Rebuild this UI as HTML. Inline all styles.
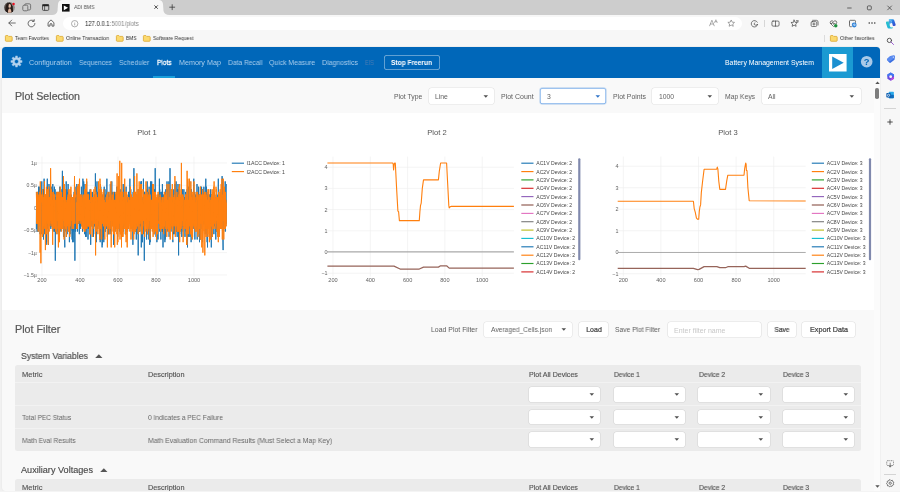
<!DOCTYPE html>
<html lang="en"><head><meta charset="utf-8"><title>ADI BMS</title>
<style>
html,body{margin:0;padding:0;}
body{width:900px;height:492px;overflow:hidden;position:relative;background:#f7f7f7;font-family:"Liberation Sans", sans-serif;}
.a{position:absolute;}
.t{position:absolute;white-space:nowrap;will-change:transform;}
.t.c{margin-left:-200px;width:400px;text-align:center;}
.t.r{margin-left:-400px;width:400px;text-align:right;}
svg{position:absolute;overflow:visible;will-change:transform;}
svg text{font-family:"Liberation Sans", sans-serif;}
</style></head>
<body>
<div class="a" style="left:0px;top:0px;width:900px;height:15px;background:#cdcdcd;"></div>
<svg style="left:52px;top:0" width="120" height="16" viewBox="0 0 120 16"><path d="M0 15 Q4.5 15 5.5 11 L6 4 Q6.5 0 10.5 0 L106.5 0 Q110.5 0 111 4 L111.5 11 Q112.5 15 117.5 15 Z" fill="#f7f7f7"/></svg>
<div class="a" style="left:0px;top:14.6px;width:900px;height:32px;background:#f7f7f7;"></div>
<svg style="left:4.2px;top:1.9px" width="12" height="11" viewBox="0 0 12 11">
<defs><clipPath id="av"><circle cx="5.5" cy="5.4" r="5.3"/></clipPath></defs>
<g clip-path="url(#av)"><rect x="0" y="0" width="12" height="11" fill="#8d8a88"/>
<rect x="0" y="0" width="4" height="11" fill="#5b5450"/>
<path d="M1.2 11 Q1 4 3 1.600 Q5 -0.300 7 1.200 Q8.600 3 8.300 7 L9 11 Z" fill="#2a1f1b"/>
<ellipse cx="5.600" cy="3.900" rx="1.350" ry="1.900" fill="#e6bfa9"/>
<path d="M3.600 11 Q3.800 7 5.300 6.600 L6.200 6.600 Q7.400 7.200 7.600 11 Z" fill="#ddb29b"/>
<path d="M2.200 11 L2.800 4 Q3.600 2 4.600 2.400 Q4 4.500 4.300 7 L3.800 11 Z" fill="#241a17"/>
<path d="M6.700 2.500 Q7.800 4 7.400 7 L8.200 11 L9.200 11 L8.600 4 Z" fill="#241a17"/></g>
<circle cx="9.600" cy="2.000" r="1.200" fill="#ee1122"/></svg>
<svg style="left:22px;top:3px" width="10" height="9" viewBox="0 0 10 9" fill="none" stroke="#6a6a6a" stroke-width="0.9">
<rect x="2.6" y="0.8" width="6" height="6.2" rx="1.4"/><rect x="0.8" y="2.2" width="5" height="5.6" rx="1.3" fill="#cdcdcd"/></svg>
<svg style="left:42px;top:4.1px" width="7.2" height="7.2" viewBox="0 0 8 8"><rect x="0.5" y="0.5" width="7" height="6.6" rx="1.1" fill="none" stroke="#333" stroke-width="0.9"/><rect x="0.5" y="0.5" width="7" height="2" fill="#222"/><line x1="2.9" y1="2" x2="2.9" y2="7" stroke="#333" stroke-width="0.8"/></svg>
<svg style="left:62.4px;top:3.8px" width="7.6" height="7.6" viewBox="0 0 8 8"><rect width="8" height="8" fill="#111"/><path d="M1.9 1.5 L6.4 4 L1.9 6.5 Z" fill="#fff"/></svg>
<span class="t" id="t0" style="left:74px;top:4.18px;font-size:5.6px;line-height:7.84px;color:#555;transform:scaleX(0.891);transform-origin:0 50%;">ADI BMS</span>
<svg style="left:154.1px;top:5.4px" width="4.2" height="4.2" viewBox="0 0 4.2 4.2"><path d="M0.4 0.4 L3.8 3.8 M3.8 0.4 L0.4 3.8" stroke="#333" stroke-width="0.85"/></svg>
<svg style="left:169.3px;top:4.0px" width="6.4" height="6.4" viewBox="0 0 6.4 6.4"><path d="M3.2 0.3 V6.1 M0.3 3.2 H6.1" stroke="#333" stroke-width="0.75"/></svg>
<svg style="left:846.2px;top:3.6px" width="50" height="9" viewBox="0 0 50 9" fill="none" stroke="#333" stroke-width="0.7"><path d="M1.2 4 H5.6"/><rect x="21.4" y="1.9" width="3.9" height="3.9" rx="0.9"/><path d="M41.4 1.7 L45.8 6.1 M45.8 1.7 L41.4 6.1"/></svg>
<svg style="left:8.4px;top:19.3px" width="8" height="8" viewBox="0 0 8 8" fill="none" stroke="#444" stroke-width="0.75" stroke-linecap="round" stroke-linejoin="round"><path d="M7.3 4 H0.9 M3.7 1.1 L0.8 4 L3.7 6.9"/></svg>
<svg style="left:27px;top:19px" width="9" height="9" viewBox="0 0 9 9" fill="none" stroke="#444" stroke-width="0.78" stroke-linecap="round"><path d="M7.9 4.5 A3.4 3.4 0 1 1 6.6 1.8"/><path d="M7.2 0.6 V2.4 H5.4" stroke-linejoin="round"/></svg>
<svg style="left:47px;top:19.3px" width="8" height="8" viewBox="0 0 9 9" fill="none" stroke="#444" stroke-width="0.9" stroke-linejoin="round"><path d="M1.2 4.1 L4.5 1 L7.8 4.1 V8 H5.6 V5.6 Q4.5 4.6 3.4 5.6 V8 H1.2 Z"/></svg>
<div class="a" style="left:63px;top:16.6px;width:679px;height:13.6px;background:#fff;border-radius:6.8px;"></div>
<svg style="left:70.8px;top:19.8px" width="7.4" height="7.4" viewBox="0 0 7.4 7.4" fill="none" stroke="#777" stroke-width="0.6"><circle cx="3.7" cy="3.7" r="3.2"/><path d="M3.7 3.2 V5.4 M3.7 1.9 V2.4"/></svg>
<span class="t" id="t1" style="left:85.4px;top:19.7px;font-size:6.4px;line-height:8.96px;color:#222;transform:scaleX(0.927);transform-origin:0 50%;"><span style="color:#222">127.0.0.1</span><span style="color:#8a8a8a">:5001/plots</span></span>
<svg style="left:709px;top:19.4px" width="9" height="8" viewBox="0 0 9 8" fill="none" stroke="#777" stroke-width="0.6" stroke-linecap="round" stroke-linejoin="round"><path d="M0.6 6.8 L2.9 1.2 L5.2 6.800 M1.400 5 H4.400"/><path d="M5.600 3.600 L6.900 0.700 L8.200 3.600 M6.100 2.700 H7.700" stroke-width="0.5"/></svg>
<svg style="left:726.5px;top:19.3px" width="8.4" height="8.4" viewBox="0 0 24 24" fill="none" stroke="#6a6a6a" stroke-width="1.7" stroke-linejoin="round"><path d="M12 2.8 L14.8 9 L21.5 9.7 L16.5 14.2 L17.9 20.8 L12 17.4 L6.1 20.8 L7.5 14.2 L2.5 9.7 L9.2 9 Z"/></svg>
<svg style="left:749.5px;top:18.8px" width="9" height="9" viewBox="0 0 24 24" fill="none" stroke="#3a3a3a" stroke-width="1.8" stroke-linecap="round" stroke-linejoin="round"><path d="M19.5 8.5 A8.6 8.6 0 1 0 20.3 15"/><path d="M20.3 15 Q14 18.5 11.2 14.5 Q10 11.5 13 10.2" /></svg>
<div class="a" style="left:764.1px;top:19.6px;width:0.6px;height:7.4px;background:#d6d6d6;"></div>
<svg style="left:770.5px;top:18.8px" width="9" height="9" viewBox="0 0 24 24" fill="none" stroke="#3a3a3a" stroke-width="1.8" stroke-linecap="round" stroke-linejoin="round"><rect x="2.5" y="5.5" width="19" height="13.5" rx="3"/><path d="M12 5.5 V19"/></svg>
<svg style="left:789.8px;top:18.8px" width="9" height="9" viewBox="0 0 24 24" fill="none" stroke="#3a3a3a" stroke-width="1.8" stroke-linecap="round" stroke-linejoin="round"><path d="M11 3 L13.5 8.8 L19.5 9.4 L15 13.6 L16.3 19.6 L11 16.5 L5.7 19.6 L7 13.6 L2.5 9.4 L8.5 8.8 Z"/><path d="M17 4.5 H22 M18.5 7.5 H22"/></svg>
<svg style="left:809.5px;top:18.8px" width="9" height="9" viewBox="0 0 24 24" fill="none" stroke="#3a3a3a" stroke-width="1.8" stroke-linecap="round" stroke-linejoin="round"><rect x="3" y="7" width="15" height="13" rx="3"/><path d="M7 3.5 H17 Q21.5 3.5 21.5 8 V16"/><path d="M10.5 10.5 V16.5 M7.5 13.5 H13.5"/></svg>
<svg style="left:828.8px;top:18.8px" width="9" height="9" viewBox="0 0 24 24" fill="none" stroke="#3a3a3a" stroke-width="1.8" stroke-linecap="round" stroke-linejoin="round"><path d="M12 20 L4.5 12.5 Q1.5 8.5 5 5.5 Q8.5 3.2 12 7 Q15.5 3.2 19 5.5 Q22.5 8.5 19.5 12.5"/><path d="M4 12 H8 L10 8.5 L12.5 14.5 L14 12 H16"/><circle cx="18" cy="18" r="4.6" fill="#1a8f3c" stroke="none"/></svg>
<svg style="left:847.8px;top:18.8px" width="9" height="9" viewBox="0 0 24 24" fill="none" stroke="#444" stroke-width="2" stroke-linecap="round"><path d="M4 8 V6 Q4 3.5 6.5 3.5 H17.5 Q20 3.5 20 6 V9 M4 8 V18 Q4 20.5 6.500 20.5 H9"/><circle cx="16.5" cy="16" r="6.4" fill="#2a7fd6" stroke="none"/><path d="M13.500 16.5 Q13.5 13 16.8 13 Q19.5 13.200 19.5 15.8 H15.5 Q15.8 18.600 19 18" stroke="#fff" stroke-width="1.400"/></svg>
<svg style="left:867.7px;top:22.3px" width="8" height="2" viewBox="0 0 8 2" fill="#222"><circle cx="1.2" cy="1" r="0.72"/><circle cx="4" cy="1" r="0.72"/><circle cx="6.800" cy="1" r="0.72"/></svg>
<svg style="left:884.8px;top:17.6px" width="11.6" height="11.6" viewBox="0 0 24 24"><defs><linearGradient id="cp1" x1="0" y1="0" x2="1" y2="1"><stop offset="0" stop-color="#2cc3f0"/><stop offset="0.5" stop-color="#2a6fe0"/><stop offset="1" stop-color="#3a46c8"/></linearGradient><linearGradient id="cp2" x1="0" y1="1" x2="1" y2="0"><stop offset="0" stop-color="#1aa9e8"/><stop offset="1" stop-color="#36d6b0"/></linearGradient></defs>
<path d="M9 2.500 H16 Q18.5 2.5 19.200 5 L22 13.500 Q22.800 16.500 19.500 16.500 H16.5 L13.500 6.500 Q13 4.500 11 4.500 L7.500 4.600 Q8 2.500 9 2.500 Z" fill="url(#cp1)"/>
<path d="M15 21.500 H8 Q5.500 21.500 4.800 19 L2 10.500 Q1.200 7.500 4.500 7.500 H7.500 L10.500 17.500 Q11 19.500 13 19.500 L16.500 19.400 Q16 21.500 15 21.500 Z" fill="url(#cp2)"/>
<path d="M7.500 7.500 L8.300 4.800 Q8.800 4.500 11 4.500 Q13 4.500 13.500 6.500 L14.800 10.800 Q12.500 10 10.800 11.500 L9.700 14.800 Z" fill="#2a8ee8" opacity=".85"/></svg>
<svg style="left:4.8px;top:35.1px" width="7.600" height="6.800" viewBox="0 0 7.600 6.800"><path d="M0.400 1.300 Q0.400 0.500 1.200 0.500 H2.800 L3.700 1.400 H6.400 Q7.200 1.400 7.200 2.200 V5.500 Q7.200 6.300 6.400 6.300 H1.200 Q0.400 6.300 0.400 5.500 Z" fill="#fbd96e" stroke="#d9a326" stroke-width="0.75"/></svg>
<span class="t" id="t2" style="left:15.2px;top:35.42px;font-size:5.7px;line-height:7.98px;color:#333;transform:scaleX(0.874);transform-origin:0 50%;">Team Favorites</span>
<svg style="left:55.8px;top:35.1px" width="7.600" height="6.800" viewBox="0 0 7.600 6.800"><path d="M0.400 1.300 Q0.400 0.500 1.200 0.500 H2.800 L3.700 1.400 H6.400 Q7.200 1.400 7.200 2.200 V5.500 Q7.200 6.300 6.400 6.300 H1.200 Q0.400 6.300 0.400 5.500 Z" fill="#fbd96e" stroke="#d9a326" stroke-width="0.75"/></svg>
<span class="t" id="t3" style="left:65.7px;top:35.42px;font-size:5.7px;line-height:7.98px;color:#333;transform:scaleX(0.907);transform-origin:0 50%;">Online Transaction</span>
<svg style="left:115.8px;top:35.1px" width="7.600" height="6.800" viewBox="0 0 7.600 6.800"><path d="M0.400 1.300 Q0.400 0.500 1.200 0.500 H2.800 L3.700 1.400 H6.400 Q7.200 1.400 7.200 2.200 V5.500 Q7.200 6.300 6.400 6.300 H1.200 Q0.400 6.300 0.400 5.500 Z" fill="#fbd96e" stroke="#d9a326" stroke-width="0.75"/></svg>
<span class="t" id="t4" style="left:125.6px;top:35.42px;font-size:5.7px;line-height:7.98px;color:#333;transform:scaleX(0.860);transform-origin:0 50%;">BMS</span>
<svg style="left:143.4px;top:35.1px" width="7.600" height="6.800" viewBox="0 0 7.600 6.800"><path d="M0.400 1.300 Q0.400 0.500 1.200 0.500 H2.800 L3.700 1.400 H6.400 Q7.200 1.400 7.200 2.200 V5.500 Q7.200 6.300 6.400 6.300 H1.200 Q0.400 6.300 0.400 5.500 Z" fill="#fbd96e" stroke="#d9a326" stroke-width="0.75"/></svg>
<span class="t" id="t5" style="left:153.3px;top:35.42px;font-size:5.7px;line-height:7.98px;color:#333;transform:scaleX(0.896);transform-origin:0 50%;">Software Request</span>
<div class="a" style="left:823.5px;top:34.6px;width:0.6px;height:7.6px;background:#dcdcdc;"></div>
<svg style="left:829.6px;top:35.1px" width="7.600" height="6.800" viewBox="0 0 7.600 6.800"><path d="M0.400 1.300 Q0.400 0.500 1.200 0.500 H2.800 L3.700 1.400 H6.400 Q7.200 1.400 7.200 2.200 V5.500 Q7.200 6.300 6.400 6.300 H1.200 Q0.400 6.300 0.400 5.500 Z" fill="#fbd96e" stroke="#d9a326" stroke-width="0.75"/></svg>
<span class="t" id="t6" style="left:840px;top:35.32px;font-size:5.7px;line-height:7.98px;color:#333;transform:scaleX(0.925);transform-origin:0 50%;">Other favorites</span>
<div class="a" style="left:880.4px;top:47px;width:19.6px;height:445px;background:#f7f7f7;"></div>
<svg style="left:885.8px;top:36.6px" width="8.6" height="8.6" viewBox="0 0 24 24" fill="none" stroke-width="2.400" stroke-linecap="round"><circle cx="9.500" cy="9.500" r="6" stroke="#444"/><path d="M14 14 L21 21" stroke="#8a3fc8"/></svg>
<svg style="left:886.2px;top:55px" width="9.600" height="8.600" viewBox="0 0 24 22"><path d="M11 2.500 L20 1.500 Q22.500 1.500 22.500 4 L21.500 12 L11.500 20 Q9.500 21 8 19.500 L2.500 13 Q1.500 11 3 9.500 Z" fill="#3b6fe0"/><path d="M11 2.500 L20 1.500 Q22.500 1.500 22.500 4 L21.500 8 L7 17 L2.500 13 Q1.500 11 3 9.500 Z" fill="#5b8bf0"/><circle cx="18.500" cy="5.500" r="1.500" fill="#dfe8ff"/></svg>
<svg style="left:886.2px;top:72px" width="9.400" height="9.400" viewBox="0 0 24 24"><path d="M12 1.500 L20.500 6.500 V17.500 L12 22.500 L3.500 17.500 V6.500 Z" fill="#6a4be0"/><path d="M12 1.500 L20.500 6.500 V12 L12 7 L3.500 12 V6.500 Z" fill="#3d7bf0"/><path d="M12 22.500 L20.500 17.500 V12 L12 17 Z" fill="#c04ad8"/><circle cx="12" cy="12" r="3.600" fill="#f7f7f7"/></svg>
<svg style="left:886.2px;top:90.8px" width="8.2" height="7.9" viewBox="0 0 24 23"><rect x="8" y="2" width="15" height="19" rx="2" fill="#28a8ea"/><rect x="8" y="11" width="15" height="10" rx="2" fill="#0f6cbd"/><rect x="1" y="6" width="13" height="13" rx="2" fill="#0f5fb0"/><circle cx="7.500" cy="12.500" r="3.200" fill="none" stroke="#fff" stroke-width="2"/></svg>
<div class="a" style="left:884px;top:108.2px;width:12px;height:0.6px;background:#d4d4d4;"></div>
<svg style="left:887px;top:119.400px" width="6" height="6" viewBox="0 0 6 6"><path d="M3 0.300 V5.700 M0.300 3 H5.700" stroke="#333" stroke-width="0.85"/></svg>
<svg style="left:886px;top:460.400px" width="8.400" height="7.600" viewBox="0 0 24 22" fill="none" stroke="#444" stroke-width="1.800"><rect x="2" y="2" width="20" height="14" rx="2.500" stroke-dasharray="3 2"/><path d="M12 9 V20 M8 16.500 L12 20.500 L16 16.500" stroke-linecap="round" stroke-linejoin="round"/></svg>
<div class="a" style="left:884px;top:474px;width:12px;height:0.6px;background:#d4d4d4;"></div>
<svg style="left:885.8px;top:479.300px" width="8.400" height="8.400" viewBox="0 0 24 24" fill="none" stroke="#444" stroke-width="2" stroke-linejoin="round"><path d="M12 2 L14.500 4.600 L18.200 3.800 L19.300 7.400 L22.500 9.300 L21 12.500 L22 16 L18.600 17.500 L17 21 L13.500 20.300 L10.500 22.300 L8 19.700 L4.300 19.600 L4 16 L1.500 13.200 L3.700 10.300 L3.500 6.600 L7.100 5.700 L9 2.600 Z"/><circle cx="12" cy="12" r="3.300"/></svg>
<div class="a" style="left:0px;top:46.8px;width:3px;height:446px;background:#f1f1f1;"></div>
<div class="a" style="left:2px;top:46.8px;width:878.4px;height:444px;background:#f9f9f9;border-radius:3.5px;overflow:hidden;box-shadow:0 0 0 0.4px #e6e6e6;"></div>
<div class="a" style="left:2px;top:46.8px;width:878.3px;height:30.9px;background:#0067b9;border-radius:3.5px 3.5px 0 0;"></div>
<svg style="left:9.75px;top:55.25px" width="13" height="13" viewBox="0 0 13 13"><path d="M5.62 0.92 L7.38 0.92 L7.53 2.48 L8.61 2.93 L9.82 1.93 L11.07 3.18 L10.07 4.39 L10.52 5.47 L12.08 5.62 L12.08 7.38 L10.52 7.53 L10.07 8.61 L11.07 9.82 L9.82 11.07 L8.61 10.07 L7.53 10.52 L7.38 12.08 L5.62 12.08 L5.47 10.52 L4.39 10.07 L3.18 11.07 L1.93 9.82 L2.93 8.61 L2.48 7.53 L0.92 7.38 L0.92 5.62 L2.48 5.47 L2.93 4.39 L1.93 3.18 L3.18 1.93 L4.39 2.93 L5.47 2.48 Z M6.5 4.5 A2 2 0 1 0 6.500 8.5 A2 2 0 1 0 6.5 4.5 Z" fill="#b4d2ee" fill-rule="evenodd" stroke="#b4d2ee" stroke-width="0.4" stroke-linejoin="round"/></svg>
<span class="t" id="t7" style="left:28.9px;top:58.01px;font-size:7.2px;line-height:10.08px;color:#a9cdec;">Configuration</span>
<span class="t" id="t8" style="left:78.7px;top:58.01px;font-size:7.2px;line-height:10.08px;color:#a9cdec;transform:scaleX(0.917);transform-origin:0 50%;">Sequences</span>
<span class="t" id="t9" style="left:118.7px;top:58.01px;font-size:7.2px;line-height:10.08px;color:#a9cdec;transform:scaleX(0.936);transform-origin:0 50%;">Scheduler</span>
<span class="t" id="t10" style="left:178.5px;top:58.01px;font-size:7.2px;line-height:10.08px;color:#a9cdec;">Memory Map</span>
<span class="t" id="t11" style="left:227.5px;top:58.01px;font-size:7.2px;line-height:10.08px;color:#a9cdec;transform:scaleX(0.929);transform-origin:0 50%;">Data Recall</span>
<span class="t" id="t12" style="left:268.8px;top:58.01px;font-size:7.2px;line-height:10.08px;color:#a9cdec;transform:scaleX(0.956);transform-origin:0 50%;">Quick Measure</span>
<span class="t" id="t13" style="left:322px;top:58.01px;font-size:7.2px;line-height:10.08px;color:#a9cdec;transform:scaleX(0.969);transform-origin:0 50%;">Diagnostics</span>
<span class="t" id="t14" style="left:156.8px;top:58.01px;font-size:7.2px;line-height:10.08px;color:#fff;transform:scaleX(0.901);transform-origin:0 50%;-webkit-text-stroke:0.28px #fff;">Plots</span>
<div class="a" style="left:153px;top:75.8px;width:22px;height:1.9px;background:#1a9fdb;"></div>
<span class="t" id="t15" style="left:365px;top:58.01px;font-size:7.2px;line-height:10.08px;color:#4a7db4;transform:scaleX(0.776);transform-origin:0 50%;">EIS</span>
<div class="a" style="left:384.3px;top:54.7px;width:55.3px;height:15.6px;border-radius:3px;box-shadow:inset 0 0 0 0.75px rgba(255,255,255,0.5);"></div>
<span class="t" id="t16" style="left:391.3px;top:58.25px;font-size:6.8px;line-height:9.52px;color:#fff;font-weight:700;transform:scaleX(0.969);transform-origin:0 50%;">Stop Freerun</span>
<span class="t" id="t17" style="left:725px;top:58.25px;font-size:6.8px;line-height:9.52px;color:#fff;transform:scaleX(1.015);transform-origin:0 50%;">Battery Management System</span>
<div class="a" style="left:822px;top:46.8px;width:30.6px;height:30.9px;background:#1b9ad2;"></div>
<svg style="left:828.7px;top:53.5px" width="17.6" height="17.5" viewBox="0 0 17.6 17.5"><rect width="17.6" height="17.5" fill="#fff"/><path d="M3.2 2.600 L14.700 8.750 L3.200 14.900 Z" fill="#1b8fd0"/></svg>
<svg style="left:860.5px;top:55.9px" width="11.400" height="11.400" viewBox="0 0 11.400 11.400"><circle cx="5.700" cy="5.700" r="5.800" fill="#a8c9e8"/><text x="5.700" y="9.0" font-size="9.4" font-weight="700" text-anchor="middle" fill="#0067b9">?</text></svg>
<div class="a" style="left:874.4px;top:77.7px;width:6.0px;height:413px;background:#fbfbfb;"></div>
<svg style="left:874.6px;top:81.4px" width="5" height="3.2" viewBox="0 0 5 3.200"><path d="M0.3 2.900 L2.500 0.400 L4.700 2.900 Z" fill="#555"/></svg>
<div class="a" style="left:875.4px;top:87.6px;width:3.6px;height:11.4px;background:#7d7d7d;border-radius:1.8px;"></div>
<svg style="left:874.6px;top:484.6px" width="5" height="3.200" viewBox="0 0 5 3.200"><path d="M0.300 0.300 L2.500 2.800 L4.700 0.300 Z" fill="#555"/></svg>
<span class="t" id="t18" style="left:15.3px;top:89.7px;font-size:10.0px;line-height:14.0px;color:#585858;transform:scaleX(1.063);transform-origin:0 50%;-webkit-text-stroke:0.22px #585858;">Plot Selection</span>
<span class="t" id="t19" style="left:394.0px;top:92.45px;font-size:6.8px;line-height:9.52px;color:#5c5c5c;">Plot Type</span>
<div class="a" style="left:428.6px;top:88.4px;width:65.7px;height:15.4px;background:#fff;border-radius:2.6px;box-shadow:0 0 0 0.6px rgba(0,0,0,0.09);"></div>
<svg style="left:482.7px;top:94.80000000000001px" width="5.6" height="3.0" viewBox="0 0 5 3"><path d="M0.200 0.300 H4.800 L2.500 2.800 Z" fill="#505050"/></svg>
<span class="t" id="t20" style="left:435.20000000000005px;top:91.85px;font-size:6.8px;line-height:9.52px;color:#626262;">Line</span>
<span class="t" id="t21" style="left:501px;top:92.45px;font-size:6.8px;line-height:9.52px;color:#5c5c5c;transform:scaleX(1.027);transform-origin:0 50%;">Plot Count</span>
<div class="a" style="left:540.3px;top:88.4px;width:66px;height:15.4px;background:#fff;border-radius:2.6px;box-shadow:inset 0 0 0 0.7px #7fb0ea,0 0 0 0.7px rgba(91,155,224,.35);"></div>
<svg style="left:594.6999999999999px;top:94.80000000000001px" width="5.6" height="3.0" viewBox="0 0 5 3"><path d="M0.200 0.300 H4.800 L2.500 2.800 Z" fill="#2f74c8"/></svg>
<span class="t" id="t22" style="left:546.9px;top:91.85px;font-size:6.8px;line-height:9.52px;color:#626262;">3</span>
<span class="t" id="t23" style="left:612.7px;top:92.45px;font-size:6.8px;line-height:9.52px;color:#5c5c5c;transform:scaleX(1.015);transform-origin:0 50%;">Plot Points</span>
<div class="a" style="left:652.3px;top:88.4px;width:66px;height:15.4px;background:#fff;border-radius:2.6px;box-shadow:0 0 0 0.6px rgba(0,0,0,0.09);"></div>
<svg style="left:706.6999999999999px;top:94.80000000000001px" width="5.6" height="3.0" viewBox="0 0 5 3"><path d="M0.200 0.300 H4.800 L2.500 2.800 Z" fill="#505050"/></svg>
<span class="t" id="t24" style="left:658.9px;top:91.85px;font-size:6.8px;line-height:9.52px;color:#626262;">1000</span>
<span class="t" id="t25" style="left:725px;top:92.45px;font-size:6.8px;line-height:9.52px;color:#5c5c5c;transform:scaleX(0.992);transform-origin:0 50%;">Map Keys</span>
<div class="a" style="left:761.7px;top:88.4px;width:99px;height:15.4px;background:#fff;border-radius:2.6px;box-shadow:0 0 0 0.6px rgba(0,0,0,0.09);"></div>
<svg style="left:849.1px;top:94.80000000000001px" width="5.6" height="3.0" viewBox="0 0 5 3"><path d="M0.200 0.300 H4.800 L2.500 2.800 Z" fill="#505050"/></svg>
<span class="t" id="t26" style="left:768.3000000000001px;top:91.85px;font-size:6.8px;line-height:9.52px;color:#626262;">All</span>
<div class="a" style="left:2px;top:112.7px;width:872.4px;height:197.7px;background:#fff;"></div>
<span class="t c" id="t27" style="left:147px;top:127.56px;font-size:7.6px;line-height:10.64px;color:#555;transform-origin:50% 50%;">Plot 1</span>
<span class="t c" id="t28" style="left:437.4px;top:127.56px;font-size:7.6px;line-height:10.64px;color:#555;transform-origin:50% 50%;">Plot 2</span>
<span class="t c" id="t29" style="left:728.4px;top:127.56px;font-size:7.6px;line-height:10.64px;color:#555;transform-origin:50% 50%;">Plot 3</span>
<svg style="left:0;top:0" width="900" height="492" viewBox="0 0 900 492">
<path d="M42.0 156.6 V276.5" stroke="#ececec" stroke-width="0.6"/>
<text x="42.0" y="281.6" font-size="5.6" fill="#626262" text-anchor="middle">200</text>
<path d="M80.0 156.6 V276.5" stroke="#ececec" stroke-width="0.6"/>
<text x="80.0" y="281.6" font-size="5.6" fill="#626262" text-anchor="middle">400</text>
<path d="M118.0 156.6 V276.5" stroke="#ececec" stroke-width="0.6"/>
<text x="118.0" y="281.6" font-size="5.6" fill="#626262" text-anchor="middle">600</text>
<path d="M156.0 156.6 V276.5" stroke="#ececec" stroke-width="0.6"/>
<text x="156.0" y="281.6" font-size="5.6" fill="#626262" text-anchor="middle">800</text>
<path d="M194.0 156.6 V276.5" stroke="#ececec" stroke-width="0.6"/>
<text x="194.0" y="281.6" font-size="5.6" fill="#626262" text-anchor="middle">1000</text>
<path d="M36.0 163.0 H227.0" stroke="#ececec" stroke-width="0.6"/>
<text x="36.8" y="164.9" font-size="5.2" fill="#626262" text-anchor="end">1µ</text>
<path d="M36.0 185.4 H227.0" stroke="#ececec" stroke-width="0.6"/>
<text x="36.8" y="187.3" font-size="5.2" fill="#626262" text-anchor="end">0.5µ</text>
<path d="M36.0 207.8 H227.0" stroke="#dcdcdc" stroke-width="0.6"/>
<text x="36.8" y="209.7" font-size="5.2" fill="#626262" text-anchor="end">0</text>
<path d="M36.0 230.2 H227.0" stroke="#ececec" stroke-width="0.6"/>
<text x="36.8" y="232.1" font-size="5.2" fill="#626262" text-anchor="end">−0.5µ</text>
<path d="M36.0 252.6 H227.0" stroke="#ececec" stroke-width="0.6"/>
<text x="36.8" y="254.5" font-size="5.2" fill="#626262" text-anchor="end">−1µ</text>
<path d="M36.0 275.0 H227.0" stroke="#ececec" stroke-width="0.6"/>
<text x="36.8" y="276.9" font-size="5.2" fill="#626262" text-anchor="end">−1.5µ</text>
<path d="M36.3 228.9 L36.5 199.9 L36.7 228.9 L36.9 191.9 L37.1 228.9 L37.3 231.6 L37.4 221.0 L37.6 202.5 L37.8 228.9 L38.0 191.9 L38.2 231.6 L38.4 202.5 L38.6 186.7 L38.8 191.9 L39.0 221.0 L39.2 194.6 L39.3 186.7 L39.5 221.0 L39.7 194.6 L39.9 197.2 L40.1 234.2 L40.3 199.9 L40.5 221.0 L40.7 197.2 L40.9 228.9 L41.1 194.6 L41.2 234.2 L41.4 191.9 L41.6 226.3 L41.8 181.4 L42.0 221.0 L42.2 197.2 L42.4 221.0 L42.6 191.9 L42.8 189.3 L43.0 197.2 L43.1 194.6 L43.3 189.3 L43.5 239.5 L43.7 194.6 L43.9 228.9 L44.1 178.7 L44.3 226.3 L44.5 191.9 L44.7 234.2 L44.9 223.7 L45.0 223.7 L45.2 202.5 L45.4 231.6 L45.6 231.6 L45.8 221.0 L46.0 194.6 L46.2 244.8 L46.4 199.9 L46.6 242.2 L46.8 189.3 L47.0 226.3 L47.1 186.7 L47.3 178.7 L47.5 197.2 L47.7 228.9 L47.9 197.2 L48.1 194.6 L48.3 194.6 L48.5 244.8 L48.7 197.2 L48.9 223.7 L49.0 184.0 L49.2 223.7 L49.4 191.9 L49.6 189.3 L49.8 197.2 L50.0 226.3 L50.2 186.7 L50.4 226.3 L50.6 186.7 L50.8 228.9 L50.9 197.2 L51.1 226.3 L51.3 186.7 L51.5 199.9 L51.7 202.5 L51.9 226.3 L52.1 189.3 L52.3 223.7 L52.5 197.2 L52.7 228.9 L52.8 184.0 L53.0 226.3 L53.2 202.5 L53.4 221.0 L53.6 194.6 L53.8 231.6 L54.0 228.9 L54.2 197.2 L54.4 186.7 L54.6 231.6 L54.7 228.9 L54.9 223.7 L55.1 189.3 L55.3 260.7 L55.5 199.9 L55.7 234.2 L55.9 197.2 L56.1 223.7 L56.3 202.5 L56.5 226.3 L56.7 191.9 L56.8 226.3 L57.0 231.6 L57.2 199.9 L57.4 194.6 L57.6 226.3 L57.8 194.6 L58.0 234.2 L58.2 234.2 L58.4 228.9 L58.6 199.9 L58.7 191.9 L58.9 194.6 L59.1 228.9 L59.3 231.6 L59.5 226.3 L59.7 186.7 L59.9 223.7 L60.1 231.6 L60.3 223.7 L60.5 197.2 L60.6 228.9 L60.8 194.6 L61.0 228.9 L61.2 199.9 L61.4 223.7 L61.6 191.9 L61.8 223.7 L62.0 189.3 L62.2 197.2 L62.4 170.8 L62.5 221.0 L62.7 191.9 L62.9 221.0 L63.1 199.9 L63.3 226.3 L63.5 236.9 L63.7 231.6 L63.9 202.5 L64.1 228.9 L64.3 199.9 L64.4 231.6 L64.6 239.5 L64.8 247.4 L65.0 199.9 L65.2 221.0 L65.4 194.6 L65.6 221.0 L65.8 194.6 L66.0 231.6 L66.2 181.4 L66.4 228.9 L66.5 236.9 L66.7 228.9 L66.9 189.3 L67.1 234.2 L67.3 191.9 L67.5 226.3 L67.7 194.6 L67.9 223.7 L68.1 184.0 L68.3 228.9 L68.4 221.0 L68.6 221.0 L68.8 202.5 L69.0 226.3 L69.2 199.9 L69.4 242.2 L69.6 223.7 L69.8 202.5 L70.0 199.9 L70.2 234.2 L70.3 194.6 L70.5 228.9 L70.7 199.9 L70.9 226.3 L71.1 194.6 L71.3 221.0 L71.5 199.9 L71.7 228.9 L71.9 231.6 L72.1 239.5 L72.2 223.7 L72.4 228.9 L72.6 242.2 L72.8 226.3 L73.0 197.2 L73.2 231.6 L73.4 199.9 L73.6 221.0 L73.8 242.2 L74.0 231.6 L74.1 191.9 L74.3 223.7 L74.5 194.6 L74.7 221.0 L74.9 260.7 L75.1 221.0 L75.3 194.6 L75.5 231.6 L75.7 197.2 L75.9 223.7 L76.0 186.7 L76.2 223.7 L76.4 191.9 L76.6 223.7 L76.8 184.0 L77.0 221.0 L77.2 186.7 L77.4 231.6 L77.6 199.9 L77.8 221.0 L78.0 199.9 L78.1 223.7 L78.3 191.9 L78.5 223.7 L78.7 199.9 L78.9 184.0 L79.1 197.2 L79.3 234.2 L79.5 197.2 L79.7 226.3 L79.9 197.2 L80.0 226.3 L80.2 194.6 L80.4 228.9 L80.6 202.5 L80.8 202.5 L81.0 199.9 L81.2 221.0 L81.4 186.7 L81.6 223.7 L81.8 197.2 L81.9 226.3 L82.1 223.7 L82.3 223.7 L82.5 231.6 L82.7 228.9 L82.9 178.7 L83.1 191.9 L83.3 199.9 L83.5 221.0 L83.7 181.4 L83.8 226.3 L84.0 184.0 L84.2 221.0 L84.4 197.2 L84.6 234.2 L84.8 202.5 L85.0 226.3 L85.2 199.9 L85.4 223.7 L85.6 194.6 L85.7 236.9 L85.9 189.3 L86.1 236.9 L86.3 197.2 L86.5 223.7 L86.7 181.4 L86.9 228.9 L87.1 191.9 L87.3 223.7 L87.5 197.2 L87.7 228.9 L87.8 194.6 L88.0 239.5 L88.2 191.9 L88.4 228.9 L88.6 221.0 L88.8 223.7 L89.0 228.9 L89.2 228.9 L89.4 191.9 L89.6 226.3 L89.7 199.9 L89.9 226.3 L90.1 189.3 L90.3 228.9 L90.5 202.5 L90.7 244.8 L90.9 199.9 L91.1 226.3 L91.3 197.2 L91.5 221.0 L91.6 197.2 L91.8 202.5 L92.0 197.2 L92.2 226.3 L92.4 191.9 L92.6 226.3 L92.8 199.9 L93.0 226.3 L93.2 199.9 L93.4 236.9 L93.5 197.2 L93.7 234.2 L93.9 199.9 L94.1 226.3 L94.3 194.6 L94.5 226.3 L94.7 194.6 L94.9 197.2 L95.1 194.6 L95.3 199.9 L95.4 173.4 L95.6 226.3 L95.8 199.9 L96.0 236.9 L96.2 186.7 L96.4 242.2 L96.6 199.9 L96.8 189.3 L97.0 181.4 L97.2 228.9 L97.4 191.9 L97.5 226.3 L97.7 228.9 L97.9 226.3 L98.1 191.9 L98.3 223.7 L98.5 194.6 L98.7 226.3 L98.9 202.5 L99.1 223.7 L99.3 223.7 L99.4 228.9 L99.6 194.6 L99.8 239.5 L100.0 189.3 L100.2 242.2 L100.4 194.6 L100.6 223.7 L100.8 186.7 L101.0 223.7 L101.2 199.9 L101.3 231.6 L101.5 199.9 L101.7 221.0 L101.9 231.6 L102.1 247.4 L102.3 197.2 L102.5 244.8 L102.7 194.6 L102.9 202.5 L103.1 197.2 L103.2 236.9 L103.4 197.2 L103.6 231.6 L103.8 242.2 L104.0 226.3 L104.2 186.7 L104.4 226.3 L104.6 194.6 L104.8 226.3 L105.0 189.3 L105.1 231.6 L105.3 194.6 L105.5 231.6 L105.7 202.5 L105.9 223.7 L106.1 197.2 L106.3 228.9 L106.5 197.2 L106.7 199.9 L106.9 178.7 L107.1 223.7 L107.2 202.5 L107.4 236.9 L107.6 199.9 L107.8 226.3 L108.0 234.2 L108.2 234.2 L108.4 191.9 L108.6 228.9 L108.8 194.6 L109.0 234.2 L109.1 228.9 L109.3 223.7 L109.5 199.9 L109.7 221.0 L109.9 194.6 L110.1 231.6 L110.3 184.0 L110.5 228.9 L110.7 202.5 L110.9 234.2 L111.0 194.6 L111.2 223.7 L111.4 197.2 L111.6 221.0 L111.8 181.4 L112.0 226.3 L112.2 191.9 L112.4 223.7 L112.6 223.7 L112.8 223.7 L112.9 202.5 L113.1 223.7 L113.3 199.9 L113.5 244.8 L113.7 197.2 L113.9 226.3 L114.1 191.9 L114.3 231.6 L114.5 202.5 L114.7 226.3 L114.8 191.9 L115.0 231.6 L115.2 194.6 L115.4 223.7 L115.6 194.6 L115.8 223.7 L116.0 228.9 L116.2 223.7 L116.4 199.9 L116.6 223.7 L116.8 186.7 L116.9 223.7 L117.1 223.7 L117.3 221.0 L117.5 202.5 L117.7 236.9 L117.9 191.9 L118.1 223.7 L118.3 202.5 L118.5 223.7 L118.7 202.5 L118.8 223.7 L119.0 199.9 L119.2 223.7 L119.4 199.9 L119.6 231.6 L119.8 191.9 L120.0 194.6 L120.2 189.3 L120.4 234.2 L120.6 199.9 L120.7 226.3 L120.9 199.9 L121.1 228.9 L121.3 197.2 L121.5 223.7 L121.7 197.2 L121.9 221.0 L122.1 199.9 L122.3 228.9 L122.5 199.9 L122.6 226.3 L122.8 202.5 L123.0 223.7 L123.2 184.0 L123.4 231.6 L123.6 197.2 L123.8 223.7 L124.0 189.3 L124.2 197.2 L124.4 197.2 L124.5 199.9 L124.7 197.2 L124.9 226.3 L125.1 199.9 L125.3 234.2 L125.5 226.3 L125.7 234.2 L125.9 191.9 L126.1 186.7 L126.3 194.6 L126.5 221.0 L126.6 194.6 L126.8 223.7 L127.0 202.5 L127.2 226.3 L127.4 197.2 L127.6 231.6 L127.8 199.9 L128.0 221.0 L128.2 197.2 L128.4 228.9 L128.5 191.9 L128.7 226.3 L128.9 191.9 L129.1 221.0 L129.3 194.6 L129.5 199.9 L129.7 194.6 L129.9 178.7 L130.1 199.9 L130.3 223.7 L130.4 202.5 L130.6 226.3 L130.8 189.3 L131.0 228.9 L131.2 228.9 L131.4 221.0 L131.6 199.9 L131.8 199.9 L132.0 202.5 L132.2 223.7 L132.3 197.2 L132.5 223.7 L132.7 202.5 L132.9 244.8 L133.1 191.9 L133.3 223.7 L133.5 194.6 L133.7 223.7 L133.9 168.2 L134.1 228.9 L134.2 197.2 L134.4 228.9 L134.6 191.9 L134.8 221.0 L135.0 194.6 L135.2 231.6 L135.4 194.6 L135.6 194.6 L135.8 199.9 L136.0 197.2 L136.1 199.9 L136.3 239.5 L136.5 194.6 L136.7 197.2 L136.9 199.9 L137.1 223.7 L137.3 197.2 L137.5 228.9 L137.7 202.5 L137.9 234.2 L138.1 189.3 L138.2 255.4 L138.4 194.6 L138.6 223.7 L138.8 231.6 L139.0 223.7 L139.2 202.5 L139.4 231.6 L139.6 191.9 L139.8 231.6 L140.0 194.6 L140.1 223.7 L140.3 199.9 L140.5 226.3 L140.7 197.2 L140.9 181.4 L141.1 197.2 L141.3 247.4 L141.5 181.4 L141.7 226.3 L141.9 242.2 L142.0 223.7 L142.2 202.5 L142.4 242.2 L142.6 199.9 L142.8 228.9 L143.0 197.2 L143.2 228.9 L143.4 178.7 L143.6 223.7 L143.8 199.9 L143.9 234.2 L144.1 191.9 L144.3 260.7 L144.5 191.9 L144.7 223.7 L144.9 191.9 L145.1 223.7 L145.3 197.2 L145.5 223.7 L145.7 194.6 L145.8 199.9 L146.0 223.7 L146.2 223.7 L146.4 194.6 L146.6 239.5 L146.8 189.3 L147.0 221.0 L147.2 181.4 L147.4 234.2 L147.6 228.9 L147.8 223.7 L147.9 202.5 L148.1 231.6 L148.3 191.9 L148.5 226.3 L148.7 199.9 L148.9 239.5 L149.1 186.7 L149.3 228.9 L149.5 194.6 L149.7 244.8 L149.8 199.9 L150.0 226.3 L150.2 242.2 L150.4 197.2 L150.6 181.4 L150.8 228.9 L151.0 186.7 L151.2 226.3 L151.4 197.2 L151.6 228.9 L151.7 181.4 L151.9 226.3 L152.1 186.7 L152.3 184.0 L152.5 202.5 L152.7 223.7 L152.9 194.6 L153.1 226.3 L153.3 202.5 L153.5 223.7 L153.6 194.6 L153.8 223.7 L154.0 223.7 L154.2 234.2 L154.4 189.3 L154.6 228.9 L154.8 191.9 L155.0 226.3 L155.2 168.2 L155.4 226.3 L155.5 191.9 L155.7 228.9 L155.9 234.2 L156.1 236.9 L156.3 199.9 L156.5 228.9 L156.7 202.5 L156.9 242.2 L157.1 199.9 L157.3 226.3 L157.5 197.2 L157.6 228.9 L157.8 221.0 L158.0 239.5 L158.2 194.6 L158.4 223.7 L158.6 194.6 L158.8 221.0 L159.0 197.2 L159.2 223.7 L159.4 178.7 L159.5 226.3 L159.7 189.3 L159.9 231.6 L160.1 191.9 L160.3 231.6 L160.5 197.2 L160.7 228.9 L160.9 239.5 L161.1 221.0 L161.3 194.6 L161.4 221.0 L161.6 191.9 L161.8 223.7 L162.0 191.9 L162.2 231.6 L162.4 184.0 L162.6 231.6 L162.8 202.5 L163.0 247.4 L163.2 202.5 L163.3 226.3 L163.5 194.6 L163.7 228.9 L163.9 197.2 L164.1 228.9 L164.3 226.3 L164.5 221.0 L164.7 191.9 L164.9 242.2 L165.1 194.6 L165.2 239.5 L165.4 197.2 L165.6 226.3 L165.8 189.3 L166.0 223.7 L166.2 223.7 L166.4 221.0 L166.6 197.2 L166.8 221.0 L167.0 181.4 L167.2 231.6 L167.3 189.3 L167.5 221.0 L167.7 199.9 L167.9 226.3 L168.1 197.2 L168.3 223.7 L168.5 191.9 L168.7 221.0 L168.9 181.4 L169.1 236.9 L169.2 197.2 L169.4 228.9 L169.6 228.9 L169.8 223.7 L170.0 168.2 L170.2 223.7 L170.4 199.9 L170.6 199.9 L170.8 199.9 L171.0 231.6 L171.1 202.5 L171.3 226.3 L171.5 202.5 L171.7 223.7 L171.9 194.6 L172.1 228.9 L172.3 199.9 L172.5 239.5 L172.7 239.5 L172.9 242.2 L173.0 202.5 L173.2 223.7 L173.4 194.6 L173.6 234.2 L173.8 189.3 L174.0 231.6 L174.2 194.6 L174.4 226.3 L174.6 184.0 L174.8 234.2 L174.9 202.5 L175.1 223.7 L175.3 184.0 L175.5 221.0 L175.7 194.6 L175.9 221.0 L176.1 181.4 L176.3 223.7 L176.5 197.2 L176.7 231.6 L176.9 197.2 L177.0 234.2 L177.2 236.9 L177.4 223.7 L177.6 189.3 L177.8 231.6 L178.0 184.0 L178.2 223.7 L178.4 223.7 L178.6 255.4 L178.8 189.3 L178.9 226.3 L179.1 199.9 L179.3 228.9 L179.5 199.9 L179.7 234.2 L179.9 199.9 L180.1 226.3 L180.3 197.2 L180.5 223.7 L180.7 202.5 L180.8 228.9 L181.0 197.2 L181.2 226.3 L181.4 184.0 L181.6 226.3 L181.8 236.9 L182.0 223.7 L182.2 199.9 L182.4 223.7 L182.6 189.3 L182.7 226.3 L182.9 202.5 L183.1 231.6 L183.3 199.9 L183.5 228.9 L183.7 197.2 L183.9 189.3 L184.1 197.2 L184.3 228.9 L184.5 197.2 L184.6 226.3 L184.8 199.9 L185.0 236.9 L185.2 202.5 L185.4 221.0 L185.6 191.9 L185.8 231.6 L186.0 221.0 L186.2 223.7 L186.4 197.2 L186.6 239.5 L186.7 194.6 L186.9 223.7 L187.1 189.3 L187.3 226.3 L187.5 247.4 L187.7 223.7 L187.9 189.3 L188.1 221.0 L188.3 186.7 L188.5 234.2 L188.6 231.6 L188.8 236.9 L189.0 189.3 L189.2 221.0 L189.4 181.4 L189.6 228.9 L189.8 181.4 L190.0 236.9 L190.2 197.2 L190.4 221.0 L190.5 197.2 L190.7 223.7 L190.9 197.2 L191.1 242.2 L191.3 236.9 L191.5 189.3 L191.7 199.9 L191.9 234.2 L192.1 199.9 L192.3 223.7 L192.4 194.6 L192.6 226.3 L192.8 228.9 L193.0 221.0 L193.2 228.9 L193.4 221.0 L193.6 181.4 L193.8 178.7 L194.0 197.2 L194.2 226.3 L194.3 194.6 L194.5 221.0 L194.7 191.9 L194.9 239.5 L195.1 199.9 L195.3 223.7 L195.5 194.6 L195.7 228.9 L195.9 197.2 L196.1 223.7 L196.2 199.9 L196.4 223.7 L196.6 228.9 L196.8 228.9 L197.0 184.0 L197.2 239.5 L197.4 194.6 L197.6 223.7 L197.8 194.6 L198.0 226.3 L198.2 197.2 L198.3 226.3 L198.5 186.7 L198.7 194.6 L198.9 197.2 L199.1 236.9 L199.3 194.6 L199.5 242.2 L199.7 197.2 L199.9 221.0 L200.1 197.2 L200.2 236.9 L200.4 186.7 L200.6 239.5 L200.8 197.2 L201.0 221.0 L201.2 191.9 L201.4 202.5 L201.6 186.7 L201.8 228.9 L202.0 199.9 L202.1 223.7 L202.3 189.3 L202.5 242.2 L202.7 189.3 L202.9 226.3 L203.1 199.9 L203.3 221.0 L203.5 194.6 L203.7 223.7 L203.9 186.7 L204.0 223.7 L204.2 199.9 L204.4 221.0 L204.6 191.9 L204.8 223.7 L205.0 197.2 L205.2 234.2 L205.4 197.2 L205.6 199.9 L205.8 178.7 L205.9 234.2 L206.1 226.3 L206.3 221.0 L206.5 186.7 L206.7 221.0 L206.9 191.9 L207.1 242.2 L207.3 199.9 L207.5 247.4 L207.7 194.6 L207.9 223.7 L208.0 197.2 L208.2 223.7 L208.4 194.6 L208.6 221.0 L208.8 199.9 L209.0 226.3 L209.2 194.6 L209.4 228.9 L209.6 194.6 L209.8 228.9 L209.9 202.5 L210.1 228.9 L210.3 199.9 L210.5 221.0 L210.7 189.3 L210.9 221.0 L211.1 194.6 L211.3 247.4 L211.5 194.6 L211.7 197.2 L211.8 202.5 L212.0 202.5 L212.2 202.5 L212.4 236.9 L212.6 197.2 L212.8 223.7 L213.0 228.9 L213.2 226.3 L213.4 199.9 L213.6 223.7 L213.7 197.2 L213.9 234.2 L214.1 202.5 L214.3 221.0 L214.5 199.9 L214.7 226.3 L214.9 194.6 L215.1 223.7 L215.3 197.2 L215.5 197.2 L215.6 199.9 L215.8 239.5 L216.0 202.5 L216.2 197.2 L216.4 199.9 L216.6 231.6 L216.8 199.9 L217.0 228.9 L217.2 199.9 L217.4 228.9 L217.6 202.5 L217.7 234.2 L217.9 194.6 L218.1 226.3 L218.3 178.7 L218.5 234.2 L218.7 199.9 L218.9 234.2 L219.1 197.2 L219.3 226.3 L219.5 197.2 L219.6 223.7 L219.8 202.5 L220.0 223.7 L220.2 191.9 L220.4 226.3 L220.6 194.6 L220.8 223.7 L221.0 199.9 L221.2 228.9 L221.4 226.3 L221.5 228.9 L221.7 228.9 L221.9 221.0 L222.1 176.1 L222.3 228.9 L222.5 178.7 L222.7 239.5 L222.9 239.5 L223.1 250.1 L223.3 194.6 L223.4 223.7 L223.6 199.9 L223.8 226.3 L224.0 194.6 L224.2 228.9 L224.4 194.6 L224.6 226.3 L224.8 199.9 L225.0 223.7 L225.2 181.4 L225.3 231.6 L225.5 194.6 L225.7 226.3 L225.9 199.9 L226.1 223.7 L226.3 184.0" fill="none" stroke="#1f77b4" stroke-width="1.0" stroke-linejoin="round"/>
<path d="M36.3 191.9 L36.5 199.9 L36.7 223.7 L36.9 194.6 L37.1 223.7 L37.3 194.6 L37.4 223.7 L37.6 191.9 L37.8 202.5 L38.0 194.6 L38.2 231.6 L38.4 199.9 L38.6 223.7 L38.8 197.2 L39.0 226.3 L39.2 194.6 L39.3 221.0 L39.5 197.2 L39.7 223.7 L39.9 191.9 L40.1 252.7 L40.3 181.4 L40.5 234.2 L40.7 191.9 L40.9 263.3 L41.1 197.2 L41.2 202.5 L41.4 199.9 L41.6 194.6 L41.8 199.9 L42.0 228.9 L42.2 228.9 L42.4 236.9 L42.6 189.3 L42.8 234.2 L43.0 197.2 L43.1 234.2 L43.3 197.2 L43.5 223.7 L43.7 226.3 L43.9 221.0 L44.1 194.6 L44.3 228.9 L44.5 181.4 L44.7 223.7 L44.9 194.6 L45.0 223.7 L45.2 194.6 L45.4 250.1 L45.6 194.6 L45.8 226.3 L46.0 199.9 L46.2 234.2 L46.4 186.7 L46.6 221.0 L46.8 197.2 L47.0 234.2 L47.1 202.5 L47.3 223.7 L47.5 197.2 L47.7 189.3 L47.9 199.9 L48.1 244.8 L48.3 197.2 L48.5 228.9 L48.7 186.7 L48.9 191.9 L49.0 202.5 L49.2 231.6 L49.4 197.2 L49.6 223.7 L49.8 199.9 L50.0 226.3 L50.2 197.2 L50.4 221.0 L50.6 168.2 L50.8 186.7 L50.9 186.7 L51.1 223.7 L51.3 189.3 L51.5 223.7 L51.7 194.6 L51.9 226.3 L52.1 191.9 L52.3 228.9 L52.5 199.9 L52.7 244.8 L52.8 199.9 L53.0 223.7 L53.2 199.9 L53.4 199.9 L53.6 191.9 L53.8 228.9 L54.0 197.2 L54.2 226.3 L54.4 194.6 L54.6 226.3 L54.7 194.6 L54.9 228.9 L55.1 202.5 L55.3 199.9 L55.5 228.9 L55.7 231.6 L55.9 231.6 L56.1 231.6 L56.3 199.9 L56.5 197.2 L56.7 194.6 L56.8 234.2 L57.0 191.9 L57.2 221.0 L57.4 199.9 L57.6 197.2 L57.8 191.9 L58.0 228.9 L58.2 191.9 L58.4 247.4 L58.6 194.6 L58.7 223.7 L58.9 197.2 L59.1 239.5 L59.3 191.9 L59.5 242.2 L59.7 194.6 L59.9 228.9 L60.1 191.9 L60.3 186.7 L60.5 197.2 L60.6 228.9 L60.8 199.9 L61.0 226.3 L61.2 194.6 L61.4 231.6 L61.6 191.9 L61.8 223.7 L62.0 221.0 L62.2 221.0 L62.4 197.2 L62.5 228.9 L62.7 197.2 L62.9 228.9 L63.1 202.5 L63.3 221.0 L63.5 176.1 L63.7 199.9 L63.9 199.9 L64.1 239.5 L64.3 184.0 L64.4 226.3 L64.6 197.2 L64.8 221.0 L65.0 199.9 L65.2 194.6 L65.4 189.3 L65.6 228.9 L65.8 202.5 L66.0 223.7 L66.2 236.9 L66.4 234.2 L66.5 202.5 L66.7 228.9 L66.9 199.9 L67.1 221.0 L67.3 199.9 L67.5 226.3 L67.7 197.2 L67.9 221.0 L68.1 194.6 L68.3 231.6 L68.4 194.6 L68.6 223.7 L68.8 189.3 L69.0 231.6 L69.2 231.6 L69.4 228.9 L69.6 194.6 L69.8 236.9 L70.0 189.3 L70.2 226.3 L70.3 202.5 L70.5 223.7 L70.7 194.6 L70.9 186.7 L71.1 189.3 L71.3 221.0 L71.5 199.9 L71.7 197.2 L71.9 199.9 L72.1 228.9 L72.2 202.5 L72.4 223.7 L72.6 197.2 L72.8 226.3 L73.0 199.9 L73.2 228.9 L73.4 202.5 L73.6 228.9 L73.8 194.6 L74.0 223.7 L74.1 194.6 L74.3 194.6 L74.5 176.1 L74.7 223.7 L74.9 189.3 L75.1 197.2 L75.3 191.9 L75.5 197.2 L75.7 197.2 L75.9 194.6 L76.0 197.2 L76.2 223.7 L76.4 202.5 L76.6 228.9 L76.8 202.5 L77.0 221.0 L77.2 186.7 L77.4 228.9 L77.6 223.7 L77.8 186.7 L78.0 191.9 L78.1 221.0 L78.3 184.0 L78.5 221.0 L78.7 197.2 L78.9 223.7 L79.1 202.5 L79.3 184.0 L79.5 178.7 L79.7 221.0 L79.9 202.5 L80.0 221.0 L80.2 197.2 L80.4 221.0 L80.6 194.6 L80.8 223.7 L81.0 197.2 L81.2 199.9 L81.4 197.2 L81.6 221.0 L81.8 194.6 L81.9 226.3 L82.1 197.2 L82.3 228.9 L82.5 202.5 L82.7 226.3 L82.9 199.9 L83.1 228.9 L83.3 228.9 L83.5 228.9 L83.7 194.6 L83.8 223.7 L84.0 197.2 L84.2 231.6 L84.4 199.9 L84.6 194.6 L84.8 189.3 L85.0 231.6 L85.2 199.9 L85.4 221.0 L85.6 189.3 L85.7 228.9 L85.9 184.0 L86.1 228.9 L86.3 184.0 L86.5 221.0 L86.7 178.7 L86.9 228.9 L87.1 197.2 L87.3 226.3 L87.5 194.6 L87.7 221.0 L87.8 194.6 L88.0 226.3 L88.2 194.6 L88.4 226.3 L88.6 194.6 L88.8 226.3 L89.0 199.9 L89.2 226.3 L89.4 199.9 L89.6 234.2 L89.7 202.5 L89.9 234.2 L90.1 226.3 L90.3 234.2 L90.5 202.5 L90.7 191.9 L90.9 189.3 L91.1 226.3 L91.3 191.9 L91.5 221.0 L91.6 199.9 L91.8 221.0 L92.0 197.2 L92.2 236.9 L92.4 202.5 L92.6 221.0 L92.8 197.2 L93.0 228.9 L93.2 226.3 L93.4 226.3 L93.5 197.2 L93.7 223.7 L93.9 189.3 L94.1 223.7 L94.3 199.9 L94.5 202.5 L94.7 197.2 L94.9 223.7 L95.1 186.7 L95.3 228.9 L95.4 199.9 L95.6 255.4 L95.8 191.9 L96.0 226.3 L96.2 197.2 L96.4 223.7 L96.6 194.6 L96.8 231.6 L97.0 202.5 L97.2 221.0 L97.4 226.3 L97.5 221.0 L97.7 197.2 L97.9 234.2 L98.1 221.0 L98.3 221.0 L98.5 181.4 L98.7 221.0 L98.9 199.9 L99.1 228.9 L99.3 199.9 L99.4 226.3 L99.6 189.3 L99.8 239.5 L100.0 178.7 L100.2 223.7 L100.4 184.0 L100.6 228.9 L100.8 194.6 L101.0 228.9 L101.2 189.3 L101.3 228.9 L101.5 194.6 L101.7 239.5 L101.9 191.9 L102.1 223.7 L102.3 197.2 L102.5 221.0 L102.7 199.9 L102.9 223.7 L103.1 194.6 L103.2 221.0 L103.4 197.2 L103.6 226.3 L103.8 189.3 L104.0 223.7 L104.2 199.9 L104.4 223.7 L104.6 202.5 L104.8 239.5 L105.0 202.5 L105.1 221.0 L105.3 202.5 L105.5 228.9 L105.7 221.0 L105.9 223.7 L106.1 197.2 L106.3 223.7 L106.5 199.9 L106.7 226.3 L106.9 194.6 L107.1 221.0 L107.2 202.5 L107.4 247.4 L107.6 199.9 L107.8 221.0 L108.0 191.9 L108.2 228.9 L108.4 199.9 L108.6 223.7 L108.8 221.0 L109.0 226.3 L109.1 197.2 L109.3 234.2 L109.5 197.2 L109.7 226.3 L109.9 191.9 L110.1 228.9 L110.3 197.2 L110.5 221.0 L110.7 202.5 L110.9 181.4 L111.0 199.9 L111.2 247.4 L111.4 199.9 L111.6 234.2 L111.8 199.9 L112.0 199.9 L112.2 194.6 L112.4 221.0 L112.6 199.9 L112.8 226.3 L112.9 197.2 L113.1 231.6 L113.3 191.9 L113.5 234.2 L113.7 202.5 L113.9 223.7 L114.1 199.9 L114.3 231.6 L114.5 202.5 L114.7 247.4 L114.8 199.9 L115.0 231.6 L115.2 199.9 L115.4 226.3 L115.6 202.5 L115.8 202.5 L116.0 191.9 L116.2 228.9 L116.4 194.6 L116.6 226.3 L116.8 197.2 L116.9 234.2 L117.1 173.4 L117.3 244.8 L117.5 186.7 L117.7 236.9 L117.9 242.2 L118.1 231.6 L118.3 186.7 L118.5 228.9 L118.7 176.1 L118.8 228.9 L119.0 202.5 L119.2 223.7 L119.4 202.5 L119.6 221.0 L119.8 160.8 L120.0 239.5 L120.2 197.2 L120.4 234.2 L120.6 191.9 L120.7 228.9 L120.9 194.6 L121.1 226.3 L121.3 194.6 L121.5 247.4 L121.7 162.9 L121.9 223.7 L122.1 197.2 L122.3 236.9 L122.5 191.9 L122.6 226.3 L122.8 191.9 L123.0 236.9 L123.2 234.2 L123.4 221.0 L123.6 197.2 L123.8 223.7 L124.0 199.9 L124.2 228.9 L124.4 202.5 L124.5 221.0 L124.7 178.7 L124.9 228.9 L125.1 191.9 L125.3 221.0 L125.5 234.2 L125.7 223.7 L125.9 199.9 L126.1 242.2 L126.3 191.9 L126.5 221.0 L126.6 191.9 L126.8 231.6 L127.0 194.6 L127.2 247.4 L127.4 202.5 L127.6 228.9 L127.8 202.5 L128.0 223.7 L128.2 197.2 L128.4 228.9 L128.5 199.9 L128.7 226.3 L128.9 197.2 L129.1 223.7 L129.3 199.9 L129.5 221.0 L129.7 202.5 L129.9 231.6 L130.1 199.9 L130.3 228.9 L130.4 186.7 L130.6 197.2 L130.8 194.6 L131.0 239.5 L131.2 197.2 L131.4 226.3 L131.6 194.6 L131.8 228.9 L132.0 197.2 L132.2 231.6 L132.3 197.2 L132.5 226.3 L132.7 199.9 L132.9 223.7 L133.1 202.5 L133.3 221.0 L133.5 194.6 L133.7 239.5 L133.9 191.9 L134.1 234.2 L134.2 191.9 L134.4 228.9 L134.6 176.1 L134.8 221.0 L135.0 199.9 L135.2 231.6 L135.4 191.9 L135.6 231.6 L135.8 191.9 L136.0 221.0 L136.1 194.6 L136.3 228.9 L136.5 197.2 L136.7 223.7 L136.9 173.4 L137.1 221.0 L137.3 199.9 L137.5 226.3 L137.7 194.6 L137.9 226.3 L138.1 189.3 L138.2 234.2 L138.4 202.5 L138.6 221.0 L138.8 191.9 L139.0 223.7 L139.2 181.4 L139.4 223.7 L139.6 189.3 L139.8 231.6 L140.0 186.7 L140.1 223.7 L140.3 194.6 L140.5 221.0 L140.7 184.0 L140.9 221.0 L141.1 189.3 L141.3 228.9 L141.5 184.0 L141.7 234.2 L141.9 189.3 L142.0 228.9 L142.2 199.9 L142.4 234.2 L142.6 202.5 L142.8 226.3 L143.0 199.9 L143.2 189.3 L143.4 197.2 L143.6 221.0 L143.8 194.6 L143.9 197.2 L144.1 197.2 L144.3 228.9 L144.5 194.6 L144.7 236.9 L144.9 194.6 L145.1 223.7 L145.3 202.5 L145.5 223.7 L145.7 194.6 L145.8 231.6 L146.0 181.4 L146.2 226.3 L146.4 194.6 L146.6 228.9 L146.8 199.9 L147.0 228.9 L147.2 191.9 L147.4 234.2 L147.6 197.2 L147.8 231.6 L147.9 199.9 L148.1 226.3 L148.3 197.2 L148.5 223.7 L148.7 194.6 L148.9 228.9 L149.1 189.3 L149.3 189.3 L149.5 202.5 L149.7 221.0 L149.8 197.2 L150.0 239.5 L150.2 194.6 L150.4 221.0 L150.6 223.7 L150.8 228.9 L151.0 199.9 L151.2 228.9 L151.4 199.9 L151.6 228.9 L151.7 202.5 L151.9 221.0 L152.1 199.9 L152.3 231.6 L152.5 184.0 L152.7 223.7 L152.9 191.9 L153.1 236.9 L153.3 184.0 L153.5 228.9 L153.6 194.6 L153.8 226.3 L154.0 191.9 L154.2 226.3 L154.4 191.9 L154.6 234.2 L154.8 194.6 L155.0 223.7 L155.2 194.6 L155.4 231.6 L155.5 191.9 L155.7 228.9 L155.9 199.9 L156.1 226.3 L156.3 197.2 L156.5 239.5 L156.7 199.9 L156.9 234.2 L157.1 194.6 L157.3 223.7 L157.5 197.2 L157.6 234.2 L157.8 199.9 L158.0 191.9 L158.2 191.9 L158.4 202.5 L158.6 199.9 L158.8 223.7 L159.0 221.0 L159.2 223.7 L159.4 199.9 L159.5 223.7 L159.7 197.2 L159.9 228.9 L160.1 194.6 L160.3 228.9 L160.5 202.5 L160.7 231.6 L160.9 197.2 L161.1 228.9 L161.3 202.5 L161.4 226.3 L161.6 221.0 L161.8 228.9 L162.0 199.9 L162.2 228.9 L162.4 197.2 L162.6 226.3 L162.8 199.9 L163.0 223.7 L163.2 202.5 L163.3 226.3 L163.5 202.5 L163.7 234.2 L163.9 197.2 L164.1 226.3 L164.3 191.9 L164.5 226.3 L164.7 194.6 L164.9 199.9 L165.1 199.9 L165.2 228.9 L165.4 194.6 L165.6 221.0 L165.8 199.9 L166.0 221.0 L166.2 191.9 L166.4 231.6 L166.6 194.6 L166.8 236.9 L167.0 184.0 L167.2 228.9 L167.3 199.9 L167.5 226.3 L167.7 199.9 L167.9 223.7 L168.1 199.9 L168.3 221.0 L168.5 223.7 L168.7 231.6 L168.9 184.0 L169.1 231.6 L169.2 197.2 L169.4 197.2 L169.6 221.0 L169.8 231.6 L170.0 202.5 L170.2 239.5 L170.4 197.2 L170.6 223.7 L170.8 202.5 L171.0 228.9 L171.1 189.3 L171.3 226.3 L171.5 199.9 L171.7 189.3 L171.9 197.2 L172.1 223.7 L172.3 184.0 L172.5 239.5 L172.7 202.5 L172.9 231.6 L173.0 202.5 L173.2 226.3 L173.4 197.2 L173.6 221.0 L173.8 197.2 L174.0 223.7 L174.2 194.6 L174.4 221.0 L174.6 223.7 L174.8 226.3 L174.9 176.1 L175.1 191.9 L175.3 236.9 L175.5 221.0 L175.7 199.9 L175.9 231.6 L176.1 197.2 L176.3 226.3 L176.5 199.9 L176.7 221.0 L176.9 191.9 L177.0 223.7 L177.2 197.2 L177.4 231.6 L177.6 197.2 L177.8 231.6 L178.0 202.5 L178.2 228.9 L178.4 199.9 L178.6 231.6 L178.8 194.6 L178.9 231.6 L179.1 186.7 L179.3 221.0 L179.5 184.0 L179.7 242.2 L179.9 189.3 L180.1 223.7 L180.3 199.9 L180.5 231.6 L180.7 197.2 L180.8 221.0 L181.0 194.6 L181.2 228.9 L181.4 162.9 L181.6 223.7 L181.8 199.9 L182.0 226.3 L182.2 194.6 L182.4 221.0 L182.6 197.2 L182.7 199.9 L182.9 194.6 L183.1 242.2 L183.3 236.9 L183.5 226.3 L183.7 197.2 L183.9 199.9 L184.1 199.9 L184.3 228.9 L184.5 202.5 L184.6 228.9 L184.8 199.9 L185.0 223.7 L185.2 199.9 L185.4 221.0 L185.6 194.6 L185.8 228.9 L186.0 194.6 L186.2 234.2 L186.4 199.9 L186.6 244.8 L186.7 199.9 L186.9 244.8 L187.1 170.8 L187.3 234.2 L187.5 197.2 L187.7 221.0 L187.9 178.7 L188.1 228.9 L188.3 234.2 L188.5 228.9 L188.6 199.9 L188.8 228.9 L189.0 202.5 L189.2 197.2 L189.4 178.7 L189.6 226.3 L189.8 199.9 L190.0 221.0 L190.2 197.2 L190.4 234.2 L190.5 189.3 L190.7 234.2 L190.9 181.4 L191.1 221.0 L191.3 197.2 L191.5 236.9 L191.7 197.2 L191.9 228.9 L192.1 191.9 L192.3 239.5 L192.4 199.9 L192.6 236.9 L192.8 202.5 L193.0 221.0 L193.2 191.9 L193.4 223.7 L193.6 197.2 L193.8 226.3 L194.0 181.4 L194.2 228.9 L194.3 194.6 L194.5 226.3 L194.7 199.9 L194.9 226.3 L195.1 197.2 L195.3 231.6 L195.5 202.5 L195.7 231.6 L195.9 202.5 L196.1 223.7 L196.2 191.9 L196.4 226.3 L196.6 199.9 L196.8 231.6 L197.0 197.2 L197.2 199.9 L197.4 199.9 L197.6 191.9 L197.8 236.9 L198.0 231.6 L198.2 197.2 L198.3 223.7 L198.5 199.9 L198.7 234.2 L198.9 194.6 L199.1 228.9 L199.3 199.9 L199.5 194.6 L199.7 228.9 L199.9 199.9 L200.1 202.5 L200.2 239.5 L200.4 186.7 L200.6 223.7 L200.8 199.9 L201.0 223.7 L201.2 202.5 L201.4 223.7 L201.6 194.6 L201.8 247.4 L202.0 199.9 L202.1 231.6 L202.3 239.5 L202.5 236.9 L202.7 189.3 L202.9 252.7 L203.1 239.5 L203.3 231.6 L203.5 194.6 L203.7 221.0 L203.9 197.2 L204.0 231.6 L204.2 197.2 L204.4 191.9 L204.6 197.2 L204.8 255.4 L205.0 197.2 L205.2 228.9 L205.4 202.5 L205.6 223.7 L205.8 191.9 L205.9 236.9 L206.1 194.6 L206.3 226.3 L206.5 197.2 L206.7 228.9 L206.9 199.9 L207.1 236.9 L207.3 199.9 L207.5 226.3 L207.7 199.9 L207.9 234.2 L208.0 189.3 L208.2 226.3 L208.4 194.6 L208.6 228.9 L208.8 189.3 L209.0 236.9 L209.2 197.2 L209.4 242.2 L209.6 202.5 L209.8 221.0 L209.9 236.9 L210.1 239.5 L210.3 228.9 L210.5 223.7 L210.7 199.9 L210.9 239.5 L211.1 197.2 L211.3 221.0 L211.5 199.9 L211.7 226.3 L211.8 194.6 L212.0 226.3 L212.2 189.3 L212.4 236.9 L212.6 197.2 L212.8 226.3 L213.0 191.9 L213.2 228.9 L213.4 221.0 L213.6 228.9 L213.7 186.7 L213.9 221.0 L214.1 181.4 L214.3 221.0 L214.5 191.9 L214.7 223.7 L214.9 199.9 L215.1 228.9 L215.3 202.5 L215.5 226.3 L215.6 197.2 L215.8 223.7 L216.0 186.7 L216.2 191.9 L216.4 189.3 L216.6 221.0 L216.8 199.9 L217.0 231.6 L217.2 197.2 L217.4 223.7 L217.6 197.2 L217.7 236.9 L217.9 202.5 L218.1 231.6 L218.3 242.2 L218.5 234.2 L218.7 191.9 L218.9 221.0 L219.1 223.7 L219.3 236.9 L219.5 199.9 L219.6 228.9 L219.8 194.6 L220.0 226.3 L220.2 189.3 L220.4 228.9 L220.6 197.2 L220.8 228.9 L221.0 194.6 L221.2 184.0 L221.4 228.9 L221.5 223.7 L221.7 199.9 L221.9 178.7 L222.1 197.2 L222.3 239.5 L222.5 199.9 L222.7 199.9 L222.9 194.6 L223.1 221.0 L223.3 178.7 L223.4 191.9 L223.6 189.3 L223.8 239.5 L224.0 191.9 L224.2 221.0 L224.4 186.7 L224.6 228.9 L224.8 197.2 L225.0 228.9 L225.2 199.9 L225.3 228.9 L225.5 191.9 L225.7 223.7 L225.9 199.9 L226.1 226.3 L226.3 202.5" fill="none" stroke="#ff7f0e" stroke-width="1.0" stroke-linejoin="round"/>
<path d="M231.8 163.2 H244" stroke="#1f77b4" stroke-width="1.15"/>
<text x="246.6" y="165.1" font-size="5.4" fill="#444" textLength="38.4" lengthAdjust="spacingAndGlyphs">I1ACC Device: 1</text>
<path d="M231.8 171.6 H244" stroke="#ff7f0e" stroke-width="1.15"/>
<text x="246.6" y="173.5" font-size="5.4" fill="#444" textLength="38.4" lengthAdjust="spacingAndGlyphs">I2ACC Device: 1</text>
<path d="M333.0 156.6 V276.5" stroke="#ececec" stroke-width="0.6"/>
<text x="333.0" y="281.7" font-size="5.6" fill="#626262" text-anchor="middle">200</text>
<path d="M370.3 156.6 V276.5" stroke="#ececec" stroke-width="0.6"/>
<text x="370.3" y="281.7" font-size="5.6" fill="#626262" text-anchor="middle">400</text>
<path d="M407.6 156.6 V276.5" stroke="#ececec" stroke-width="0.6"/>
<text x="407.6" y="281.7" font-size="5.6" fill="#626262" text-anchor="middle">600</text>
<path d="M444.9 156.6 V276.5" stroke="#ececec" stroke-width="0.6"/>
<text x="444.9" y="281.7" font-size="5.6" fill="#626262" text-anchor="middle">800</text>
<path d="M482.2 156.6 V276.5" stroke="#ececec" stroke-width="0.6"/>
<text x="482.2" y="281.7" font-size="5.6" fill="#626262" text-anchor="middle">1000</text>
<path d="M327.0 167.2 H513.9" stroke="#ececec" stroke-width="0.6"/>
<text x="327.6" y="169.1" font-size="5.4" fill="#626262" text-anchor="end">4</text>
<path d="M327.0 188.4 H513.9" stroke="#ececec" stroke-width="0.6"/>
<text x="327.6" y="190.3" font-size="5.4" fill="#626262" text-anchor="end">3</text>
<path d="M327.0 209.6 H513.9" stroke="#ececec" stroke-width="0.6"/>
<text x="327.6" y="211.5" font-size="5.4" fill="#626262" text-anchor="end">2</text>
<path d="M327.0 230.8 H513.9" stroke="#ececec" stroke-width="0.6"/>
<text x="327.6" y="232.7" font-size="5.4" fill="#626262" text-anchor="end">1</text>
<path d="M327.0 252.0 H513.9" stroke="#ececec" stroke-width="0.6"/>
<text x="327.6" y="253.9" font-size="5.4" fill="#626262" text-anchor="end">0</text>
<path d="M327.0 273.2 H513.9" stroke="#ececec" stroke-width="0.6"/>
<text x="327.6" y="275.1" font-size="5.4" fill="#626262" text-anchor="end">−1</text>
<path d="M327.0 251.9 H513.9" stroke="#959595" stroke-width="0.95"/>
<path d="M327.4 266.1 L394.0 266.1 L400.1 269.0 L419.3 269.0 L423.5 267.1 L438.4 267.1 L440.6 265.8 L446.6 265.8 L449.2 268.1 L513.9 268.1" fill="none" stroke="#96645a" stroke-width="1.25" stroke-linejoin="round"/>
<path d="M327.4 163.0 L392.7 163.0 L393.2 164.0 L393.6 170.0 L394.2 164.0 L394.7 163.0 L395.3 163.0 L396.6 188.4 L397.9 211.1 L398.6 211.7 L399.4 220.6 L419.3 220.6 L419.9 211.7 L420.5 205.6 L421.2 203.2 L422.3 188.4 L423.5 179.9 L438.4 179.9 L439.3 171.4 L440.6 163.0 L446.6 163.0 L447.7 184.2 L448.8 205.4 L449.2 207.9 L450.1 206.8 L451.4 206.4 L513.9 206.4" fill="none" stroke="#ff7f0e" stroke-width="1.1" stroke-linejoin="round"/>
<path d="M521.3 163.2 H533.5" stroke="#1f77b4" stroke-width="1.15"/>
<text x="536.3" y="165.1" font-size="5.4" fill="#444" textLength="35.9" lengthAdjust="spacingAndGlyphs">AC1V Device: 2</text>
<path d="M521.3 171.6 H533.5" stroke="#ff7f0e" stroke-width="1.15"/>
<text x="536.3" y="173.5" font-size="5.4" fill="#444" textLength="35.9" lengthAdjust="spacingAndGlyphs">AC2V Device: 2</text>
<path d="M521.3 179.9 H533.5" stroke="#2ca02c" stroke-width="1.15"/>
<text x="536.3" y="181.8" font-size="5.4" fill="#444" textLength="35.9" lengthAdjust="spacingAndGlyphs">AC3V Device: 2</text>
<path d="M521.3 188.3 H533.5" stroke="#d62728" stroke-width="1.15"/>
<text x="536.3" y="190.2" font-size="5.4" fill="#444" textLength="35.9" lengthAdjust="spacingAndGlyphs">AC4V Device: 2</text>
<path d="M521.3 196.6 H533.5" stroke="#9467bd" stroke-width="1.15"/>
<text x="536.3" y="198.5" font-size="5.4" fill="#444" textLength="35.9" lengthAdjust="spacingAndGlyphs">AC5V Device: 2</text>
<path d="M521.3 205.0 H533.5" stroke="#8c564b" stroke-width="1.15"/>
<text x="536.3" y="206.9" font-size="5.4" fill="#444" textLength="35.9" lengthAdjust="spacingAndGlyphs">AC6V Device: 2</text>
<path d="M521.3 213.4 H533.5" stroke="#e377c2" stroke-width="1.15"/>
<text x="536.3" y="215.3" font-size="5.4" fill="#444" textLength="35.9" lengthAdjust="spacingAndGlyphs">AC7V Device: 2</text>
<path d="M521.3 221.7 H533.5" stroke="#7f7f7f" stroke-width="1.15"/>
<text x="536.3" y="223.6" font-size="5.4" fill="#444" textLength="35.9" lengthAdjust="spacingAndGlyphs">AC8V Device: 2</text>
<path d="M521.3 230.1 H533.5" stroke="#bcbd22" stroke-width="1.15"/>
<text x="536.3" y="232.0" font-size="5.4" fill="#444" textLength="35.9" lengthAdjust="spacingAndGlyphs">AC9V Device: 2</text>
<path d="M521.3 238.4 H533.5" stroke="#17becf" stroke-width="1.15"/>
<text x="536.3" y="240.3" font-size="5.4" fill="#444" textLength="38.8" lengthAdjust="spacingAndGlyphs">AC10V Device: 2</text>
<path d="M521.3 246.8 H533.5" stroke="#1f77b4" stroke-width="1.15"/>
<text x="536.3" y="248.7" font-size="5.4" fill="#444" textLength="38.8" lengthAdjust="spacingAndGlyphs">AC11V Device: 2</text>
<path d="M521.3 255.2 H533.5" stroke="#ff7f0e" stroke-width="1.15"/>
<text x="536.3" y="257.1" font-size="5.4" fill="#444" textLength="38.8" lengthAdjust="spacingAndGlyphs">AC12V Device: 2</text>
<path d="M521.3 263.5 H533.5" stroke="#2ca02c" stroke-width="1.15"/>
<text x="536.3" y="265.4" font-size="5.4" fill="#444" textLength="38.8" lengthAdjust="spacingAndGlyphs">AC13V Device: 2</text>
<path d="M521.3 271.9 H533.5" stroke="#d62728" stroke-width="1.15"/>
<text x="536.3" y="273.8" font-size="5.4" fill="#444" textLength="38.8" lengthAdjust="spacingAndGlyphs">AC14V Device: 2</text>
<rect x="578.2" y="158.3" width="2.2" height="102" rx="1" fill="#8089ad"/>
<path d="M623.3 156.6 V276.5" stroke="#ececec" stroke-width="0.6"/>
<text x="623.3" y="281.7" font-size="5.6" fill="#626262" text-anchor="middle">200</text>
<path d="M660.9 156.6 V276.5" stroke="#ececec" stroke-width="0.6"/>
<text x="660.9" y="281.7" font-size="5.6" fill="#626262" text-anchor="middle">400</text>
<path d="M698.5 156.6 V276.5" stroke="#ececec" stroke-width="0.6"/>
<text x="698.5" y="281.7" font-size="5.6" fill="#626262" text-anchor="middle">600</text>
<path d="M736.1 156.6 V276.5" stroke="#ececec" stroke-width="0.6"/>
<text x="736.1" y="281.7" font-size="5.6" fill="#626262" text-anchor="middle">800</text>
<path d="M773.7 156.6 V276.5" stroke="#ececec" stroke-width="0.6"/>
<text x="773.7" y="281.7" font-size="5.6" fill="#626262" text-anchor="middle">1000</text>
<path d="M617.9 166.2 H805.7" stroke="#ececec" stroke-width="0.6"/>
<text x="618.5" y="168.1" font-size="5.4" fill="#626262" text-anchor="end">4</text>
<path d="M617.9 187.7 H805.7" stroke="#ececec" stroke-width="0.6"/>
<text x="618.5" y="189.6" font-size="5.4" fill="#626262" text-anchor="end">3</text>
<path d="M617.9 209.2 H805.7" stroke="#ececec" stroke-width="0.6"/>
<text x="618.5" y="211.1" font-size="5.4" fill="#626262" text-anchor="end">2</text>
<path d="M617.9 230.7 H805.7" stroke="#ececec" stroke-width="0.6"/>
<text x="618.5" y="232.6" font-size="5.4" fill="#626262" text-anchor="end">1</text>
<path d="M617.9 252.2 H805.7" stroke="#ececec" stroke-width="0.6"/>
<text x="618.5" y="254.1" font-size="5.4" fill="#626262" text-anchor="end">0</text>
<path d="M617.9 273.7 H805.7" stroke="#ececec" stroke-width="0.6"/>
<text x="618.5" y="275.6" font-size="5.4" fill="#626262" text-anchor="end">−1</text>
<path d="M617.9 252.5 H805.7" stroke="#7c7c7c" stroke-width="0.6"/>
<path d="M617.7 268.3 L693.4 268.3 L697.6 269.7 L699.1 269.4 L704.1 266.6 L716.9 266.6 L719.8 267.7 L725.5 267.7 L727.8 266.7 L744.0 266.7 L745.7 266.1 L749.2 268.3 L805.7 268.3" fill="none" stroke="#96645a" stroke-width="1.25" stroke-linejoin="round"/>
<path d="M617.7 201.2 L693.4 201.2 L694.2 208.6 L695.3 212.4 L696.4 217.8 L697.6 219.3 L698.7 219.3 L699.3 211.3 L699.9 207.0 L700.6 204.9 L701.3 192.9 L702.6 181.2 L704.1 169.2 L716.7 169.2 L717.3 167.1 L717.9 169.2 L718.8 181.2 L719.8 189.4 L725.5 189.4 L726.7 181.2 L727.8 175.2 L744.0 175.2 L744.7 168.3 L745.7 163.0 L746.1 164.1 L746.4 170.5 L747.0 170.5 L747.9 187.7 L749.2 200.8 L805.7 201.0" fill="none" stroke="#ff7f0e" stroke-width="1.1" stroke-linejoin="round"/>
<path d="M811.8 163.2 H824.0" stroke="#1f77b4" stroke-width="1.15"/>
<text x="826.8" y="165.1" font-size="5.4" fill="#444" textLength="35.9" lengthAdjust="spacingAndGlyphs">AC1V Device: 3</text>
<path d="M811.8 171.6 H824.0" stroke="#ff7f0e" stroke-width="1.15"/>
<text x="826.8" y="173.5" font-size="5.4" fill="#444" textLength="35.9" lengthAdjust="spacingAndGlyphs">AC2V Device: 3</text>
<path d="M811.8 179.9 H824.0" stroke="#2ca02c" stroke-width="1.15"/>
<text x="826.8" y="181.8" font-size="5.4" fill="#444" textLength="35.9" lengthAdjust="spacingAndGlyphs">AC3V Device: 3</text>
<path d="M811.8 188.3 H824.0" stroke="#d62728" stroke-width="1.15"/>
<text x="826.8" y="190.2" font-size="5.4" fill="#444" textLength="35.9" lengthAdjust="spacingAndGlyphs">AC4V Device: 3</text>
<path d="M811.8 196.6 H824.0" stroke="#9467bd" stroke-width="1.15"/>
<text x="826.8" y="198.5" font-size="5.4" fill="#444" textLength="35.9" lengthAdjust="spacingAndGlyphs">AC5V Device: 3</text>
<path d="M811.8 205.0 H824.0" stroke="#8c564b" stroke-width="1.15"/>
<text x="826.8" y="206.9" font-size="5.4" fill="#444" textLength="35.9" lengthAdjust="spacingAndGlyphs">AC6V Device: 3</text>
<path d="M811.8 213.4 H824.0" stroke="#e377c2" stroke-width="1.15"/>
<text x="826.8" y="215.3" font-size="5.4" fill="#444" textLength="35.9" lengthAdjust="spacingAndGlyphs">AC7V Device: 3</text>
<path d="M811.8 221.7 H824.0" stroke="#7f7f7f" stroke-width="1.15"/>
<text x="826.8" y="223.6" font-size="5.4" fill="#444" textLength="35.9" lengthAdjust="spacingAndGlyphs">AC8V Device: 3</text>
<path d="M811.8 230.1 H824.0" stroke="#bcbd22" stroke-width="1.15"/>
<text x="826.8" y="232.0" font-size="5.4" fill="#444" textLength="35.9" lengthAdjust="spacingAndGlyphs">AC9V Device: 3</text>
<path d="M811.8 238.4 H824.0" stroke="#17becf" stroke-width="1.15"/>
<text x="826.8" y="240.3" font-size="5.4" fill="#444" textLength="38.8" lengthAdjust="spacingAndGlyphs">AC10V Device: 3</text>
<path d="M811.8 246.8 H824.0" stroke="#1f77b4" stroke-width="1.15"/>
<text x="826.8" y="248.7" font-size="5.4" fill="#444" textLength="38.8" lengthAdjust="spacingAndGlyphs">AC11V Device: 3</text>
<path d="M811.8 255.2 H824.0" stroke="#ff7f0e" stroke-width="1.15"/>
<text x="826.8" y="257.1" font-size="5.4" fill="#444" textLength="38.8" lengthAdjust="spacingAndGlyphs">AC12V Device: 3</text>
<path d="M811.8 263.5 H824.0" stroke="#2ca02c" stroke-width="1.15"/>
<text x="826.8" y="265.4" font-size="5.4" fill="#444" textLength="38.8" lengthAdjust="spacingAndGlyphs">AC13V Device: 3</text>
<path d="M811.8 271.9 H824.0" stroke="#d62728" stroke-width="1.15"/>
<text x="826.8" y="273.8" font-size="5.4" fill="#444" textLength="38.8" lengthAdjust="spacingAndGlyphs">AC15V Device: 3</text>
<rect x="868.9" y="158.3" width="2.2" height="102" rx="1" fill="#8089ad"/>
</svg>
<span class="t" id="t30" style="left:15.4px;top:322.8px;font-size:10.0px;line-height:14.0px;color:#585858;transform:scaleX(1.073);transform-origin:0 50%;-webkit-text-stroke:0.22px #585858;">Plot Filter</span>
<span class="t" id="t31" style="left:431px;top:325.15px;font-size:6.8px;line-height:9.52px;color:#5c5c5c;transform:scaleX(1.017);transform-origin:0 50%;">Load Plot Filter</span>
<div class="a" style="left:484.4px;top:321.6px;width:88px;height:15.6px;background:#fff;border-radius:2.6px;box-shadow:0 0 0 0.6px rgba(0,0,0,0.09);"></div>
<svg style="left:560.8px;top:328.1px" width="5.6" height="3.0" viewBox="0 0 5 3"><path d="M0.200 0.300 H4.800 L2.500 2.800 Z" fill="#505050"/></svg>
<span class="t" id="t32" style="left:491.0px;top:325.15px;font-size:6.8px;line-height:9.52px;color:#626262;transform:scaleX(0.980);transform-origin:0 50%;">Averaged_Cells.json</span>
<div class="a" style="left:579.3px;top:321.6px;width:29.2px;height:15.6px;background:#fff;border-radius:2.6px;box-shadow:0 0 0 0.6px rgba(0,0,0,0.10);"></div>
<span class="t c" id="t33" style="left:593.9px;top:325.23px;font-size:7.0px;line-height:9.8px;color:#444;transform-origin:50% 50%;-webkit-text-stroke:0.22px #444;">Load</span>
<span class="t" id="t34" style="left:615.2px;top:325.15px;font-size:6.8px;line-height:9.52px;color:#5c5c5c;transform:scaleX(0.981);transform-origin:0 50%;">Save Plot Filter</span>
<div class="a" style="left:667.5px;top:321.6px;width:93.5px;height:15.6px;background:#fff;border-radius:2.6px;box-shadow:0 0 0 0.6px rgba(0,0,0,0.10);"></div>
<span class="t" id="t35" style="left:674.4px;top:325.67px;font-size:6.6px;line-height:9.24px;color:#c8c8c8;transform:scaleX(1.065);transform-origin:0 50%;">Enter filter name</span>
<div class="a" style="left:767.5px;top:321.6px;width:28.5px;height:15.6px;background:#fff;border-radius:2.6px;box-shadow:0 0 0 0.6px rgba(0,0,0,0.10);"></div>
<span class="t c" id="t36" style="left:781.75px;top:325.23px;font-size:7.0px;line-height:9.8px;color:#444;transform:scaleX(0.939);transform-origin:50% 50%;transform-origin:50% 50%;-webkit-text-stroke:0.22px #444;">Save</span>
<div class="a" style="left:802.3px;top:321.6px;width:52.4px;height:15.6px;background:#fff;border-radius:2.6px;box-shadow:0 0 0 0.6px rgba(0,0,0,0.10);"></div>
<span class="t c" id="t37" style="left:828.5px;top:325.23px;font-size:7.0px;line-height:9.8px;color:#444;transform:scaleX(1.028);transform-origin:50% 50%;transform-origin:50% 50%;-webkit-text-stroke:0.22px #444;">Export Data</span>
<span class="t" id="t38" style="left:21.4px;top:350.11px;font-size:9.0px;line-height:12.6px;color:#4a4a4a;transform:scaleX(0.966);transform-origin:0 50%;-webkit-text-stroke:0.15px #4a4a4a;">System Variables</span>
<svg style="left:95.30000000000001px;top:353.5px" width="7.7" height="4.2" viewBox="0 0 7.4 4.2" preserveAspectRatio="none"><path d="M0.200 4.000 L3.700 0.200 L7.200 4.000 Z" fill="#555"/></svg>
<div class="a" style="left:15px;top:365.2px;width:846px;height:86px;background:#ebebeb;border-radius:2.5px;"></div>
<span class="t" id="t39" style="left:21.6px;top:370.23px;font-size:7.0px;line-height:9.8px;color:#555;transform:scaleX(1.070);transform-origin:0 50%;-webkit-text-stroke:0.14px #555;">Metric</span>
<span class="t" id="t40" style="left:148.3px;top:370.23px;font-size:7.0px;line-height:9.8px;color:#555;transform:scaleX(1.042);transform-origin:0 50%;-webkit-text-stroke:0.14px #555;">Description</span>
<span class="t" id="t41" style="left:529.4px;top:370.23px;font-size:7.0px;line-height:9.8px;color:#555;transform:scaleX(1.013);transform-origin:0 50%;-webkit-text-stroke:0.14px #555;">Plot All Devices</span>
<span class="t" id="t42" style="left:613.8px;top:370.23px;font-size:7.0px;line-height:9.8px;color:#555;transform:scaleX(0.947);transform-origin:0 50%;-webkit-text-stroke:0.14px #555;">Device 1</span>
<span class="t" id="t43" style="left:698.6px;top:370.23px;font-size:7.0px;line-height:9.8px;color:#555;transform:scaleX(0.962);transform-origin:0 50%;-webkit-text-stroke:0.14px #555;">Device 2</span>
<span class="t" id="t44" style="left:783.4px;top:370.23px;font-size:7.0px;line-height:9.8px;color:#555;transform:scaleX(0.962);transform-origin:0 50%;-webkit-text-stroke:0.14px #555;">Device 3</span>
<div class="a" style="left:529.3px;top:387.3px;width:71.2px;height:14.5px;background:#fff;border-radius:2.6px;box-shadow:0 0 0 0.6px rgba(0,0,0,0.09);"></div>
<svg style="left:588.9px;top:393.25px" width="5.6" height="3.0" viewBox="0 0 5 3"><path d="M0.200 0.300 H4.800 L2.500 2.800 Z" fill="#505050"/></svg>
<div class="a" style="left:613.6px;top:387.3px;width:71.5px;height:14.5px;background:#fff;border-radius:2.6px;box-shadow:0 0 0 0.6px rgba(0,0,0,0.09);"></div>
<svg style="left:673.5px;top:393.25px" width="5.6" height="3.0" viewBox="0 0 5 3"><path d="M0.200 0.300 H4.800 L2.500 2.800 Z" fill="#505050"/></svg>
<div class="a" style="left:698.0px;top:387.3px;width:71.6px;height:14.5px;background:#fff;border-radius:2.6px;box-shadow:0 0 0 0.6px rgba(0,0,0,0.09);"></div>
<svg style="left:758.0px;top:393.25px" width="5.6" height="3.0" viewBox="0 0 5 3"><path d="M0.200 0.300 H4.800 L2.500 2.800 Z" fill="#505050"/></svg>
<div class="a" style="left:782.7px;top:387.3px;width:71.7px;height:14.5px;background:#fff;border-radius:2.6px;box-shadow:0 0 0 0.6px rgba(0,0,0,0.09);"></div>
<svg style="left:842.8000000000001px;top:393.25px" width="5.6" height="3.0" viewBox="0 0 5 3"><path d="M0.200 0.300 H4.800 L2.500 2.800 Z" fill="#505050"/></svg>
<span class="t" id="t45" style="left:21.6px;top:412.81px;font-size:7.2px;line-height:10.08px;color:#646464;transform:scaleX(0.905);transform-origin:0 50%;">Total PEC Status</span>
<span class="t" id="t46" style="left:148.3px;top:412.81px;font-size:7.2px;line-height:10.08px;color:#646464;transform:scaleX(0.920);transform-origin:0 50%;">0 Indicates a PEC Failure</span>
<div class="a" style="left:529.3px;top:409.8px;width:71.2px;height:14.5px;background:#fff;border-radius:2.6px;box-shadow:0 0 0 0.6px rgba(0,0,0,0.09);"></div>
<svg style="left:588.9px;top:415.75px" width="5.6" height="3.0" viewBox="0 0 5 3"><path d="M0.200 0.300 H4.800 L2.500 2.800 Z" fill="#505050"/></svg>
<div class="a" style="left:613.6px;top:409.8px;width:71.5px;height:14.5px;background:#fff;border-radius:2.6px;box-shadow:0 0 0 0.6px rgba(0,0,0,0.09);"></div>
<svg style="left:673.5px;top:415.75px" width="5.6" height="3.0" viewBox="0 0 5 3"><path d="M0.200 0.300 H4.800 L2.500 2.800 Z" fill="#505050"/></svg>
<div class="a" style="left:698.0px;top:409.8px;width:71.6px;height:14.5px;background:#fff;border-radius:2.6px;box-shadow:0 0 0 0.6px rgba(0,0,0,0.09);"></div>
<svg style="left:758.0px;top:415.75px" width="5.6" height="3.0" viewBox="0 0 5 3"><path d="M0.200 0.300 H4.800 L2.500 2.800 Z" fill="#505050"/></svg>
<div class="a" style="left:782.7px;top:409.8px;width:71.7px;height:14.5px;background:#fff;border-radius:2.6px;box-shadow:0 0 0 0.6px rgba(0,0,0,0.09);"></div>
<svg style="left:842.8000000000001px;top:415.75px" width="5.6" height="3.0" viewBox="0 0 5 3"><path d="M0.200 0.300 H4.800 L2.500 2.800 Z" fill="#505050"/></svg>
<span class="t" id="t47" style="left:21.6px;top:435.71px;font-size:7.2px;line-height:10.08px;color:#646464;transform:scaleX(0.927);transform-origin:0 50%;">Math Eval Results</span>
<span class="t" id="t48" style="left:148.3px;top:435.71px;font-size:7.2px;line-height:10.08px;color:#646464;transform:scaleX(0.952);transform-origin:0 50%;">Math Evaluation Command Results (Must Select a Map Key)</span>
<div class="a" style="left:529.3px;top:432.3px;width:71.2px;height:14.5px;background:#fff;border-radius:2.6px;box-shadow:0 0 0 0.6px rgba(0,0,0,0.09);"></div>
<svg style="left:588.9px;top:438.25px" width="5.6" height="3.0" viewBox="0 0 5 3"><path d="M0.200 0.300 H4.800 L2.500 2.800 Z" fill="#505050"/></svg>
<div class="a" style="left:613.6px;top:432.3px;width:71.5px;height:14.5px;background:#fff;border-radius:2.6px;box-shadow:0 0 0 0.6px rgba(0,0,0,0.09);"></div>
<svg style="left:673.5px;top:438.25px" width="5.6" height="3.0" viewBox="0 0 5 3"><path d="M0.200 0.300 H4.800 L2.500 2.800 Z" fill="#505050"/></svg>
<div class="a" style="left:698.0px;top:432.3px;width:71.6px;height:14.5px;background:#fff;border-radius:2.6px;box-shadow:0 0 0 0.6px rgba(0,0,0,0.09);"></div>
<svg style="left:758.0px;top:438.25px" width="5.6" height="3.0" viewBox="0 0 5 3"><path d="M0.200 0.300 H4.800 L2.500 2.800 Z" fill="#505050"/></svg>
<div class="a" style="left:782.7px;top:432.3px;width:71.7px;height:14.5px;background:#fff;border-radius:2.6px;box-shadow:0 0 0 0.6px rgba(0,0,0,0.09);"></div>
<svg style="left:842.8000000000001px;top:438.25px" width="5.6" height="3.0" viewBox="0 0 5 3"><path d="M0.200 0.300 H4.800 L2.500 2.800 Z" fill="#505050"/></svg>
<div class="a" style="left:15px;top:381.7px;width:846px;height:0.8px;background:#f2f2f2;"></div>
<div class="a" style="left:15px;top:405.1px;width:846px;height:0.8px;background:#f2f2f2;"></div>
<div class="a" style="left:15px;top:427.7px;width:846px;height:0.8px;background:#f2f2f2;"></div>
<span class="t" id="t49" style="left:21.4px;top:464.31px;font-size:9.0px;line-height:12.6px;color:#4a4a4a;transform:scaleX(1.013);transform-origin:0 50%;-webkit-text-stroke:0.15px #4a4a4a;">Auxiliary Voltages</span>
<svg style="left:100.30000000000001px;top:467.70000000000005px" width="7.7" height="4.2" viewBox="0 0 7.4 4.2" preserveAspectRatio="none"><path d="M0.200 4.000 L3.700 0.200 L7.200 4.000 Z" fill="#555"/></svg>
<div class="a" style="left:15px;top:478.9px;width:846px;height:20px;background:#ebebeb;border-radius:2.5px;"></div>
<span class="t" id="t50" style="left:21.6px;top:483.33px;font-size:7.0px;line-height:9.8px;color:#555;transform:scaleX(1.070);transform-origin:0 50%;-webkit-text-stroke:0.14px #555;">Metric</span>
<span class="t" id="t51" style="left:148.3px;top:483.33px;font-size:7.0px;line-height:9.8px;color:#555;transform:scaleX(1.042);transform-origin:0 50%;-webkit-text-stroke:0.14px #555;">Description</span>
<span class="t" id="t52" style="left:529.4px;top:483.33px;font-size:7.0px;line-height:9.8px;color:#555;transform:scaleX(1.013);transform-origin:0 50%;-webkit-text-stroke:0.14px #555;">Plot All Devices</span>
<span class="t" id="t53" style="left:613.8px;top:483.33px;font-size:7.0px;line-height:9.8px;color:#555;transform:scaleX(0.947);transform-origin:0 50%;-webkit-text-stroke:0.14px #555;">Device 1</span>
<span class="t" id="t54" style="left:698.6px;top:483.33px;font-size:7.0px;line-height:9.8px;color:#555;transform:scaleX(0.962);transform-origin:0 50%;-webkit-text-stroke:0.14px #555;">Device 2</span>
<span class="t" id="t55" style="left:783.4px;top:483.33px;font-size:7.0px;line-height:9.8px;color:#555;transform:scaleX(0.962);transform-origin:0 50%;-webkit-text-stroke:0.14px #555;">Device 3</span>
<div class="a" style="left:0px;top:490.8px;width:900px;height:1.2px;background:#f4f4f4;"></div>
</body></html>
